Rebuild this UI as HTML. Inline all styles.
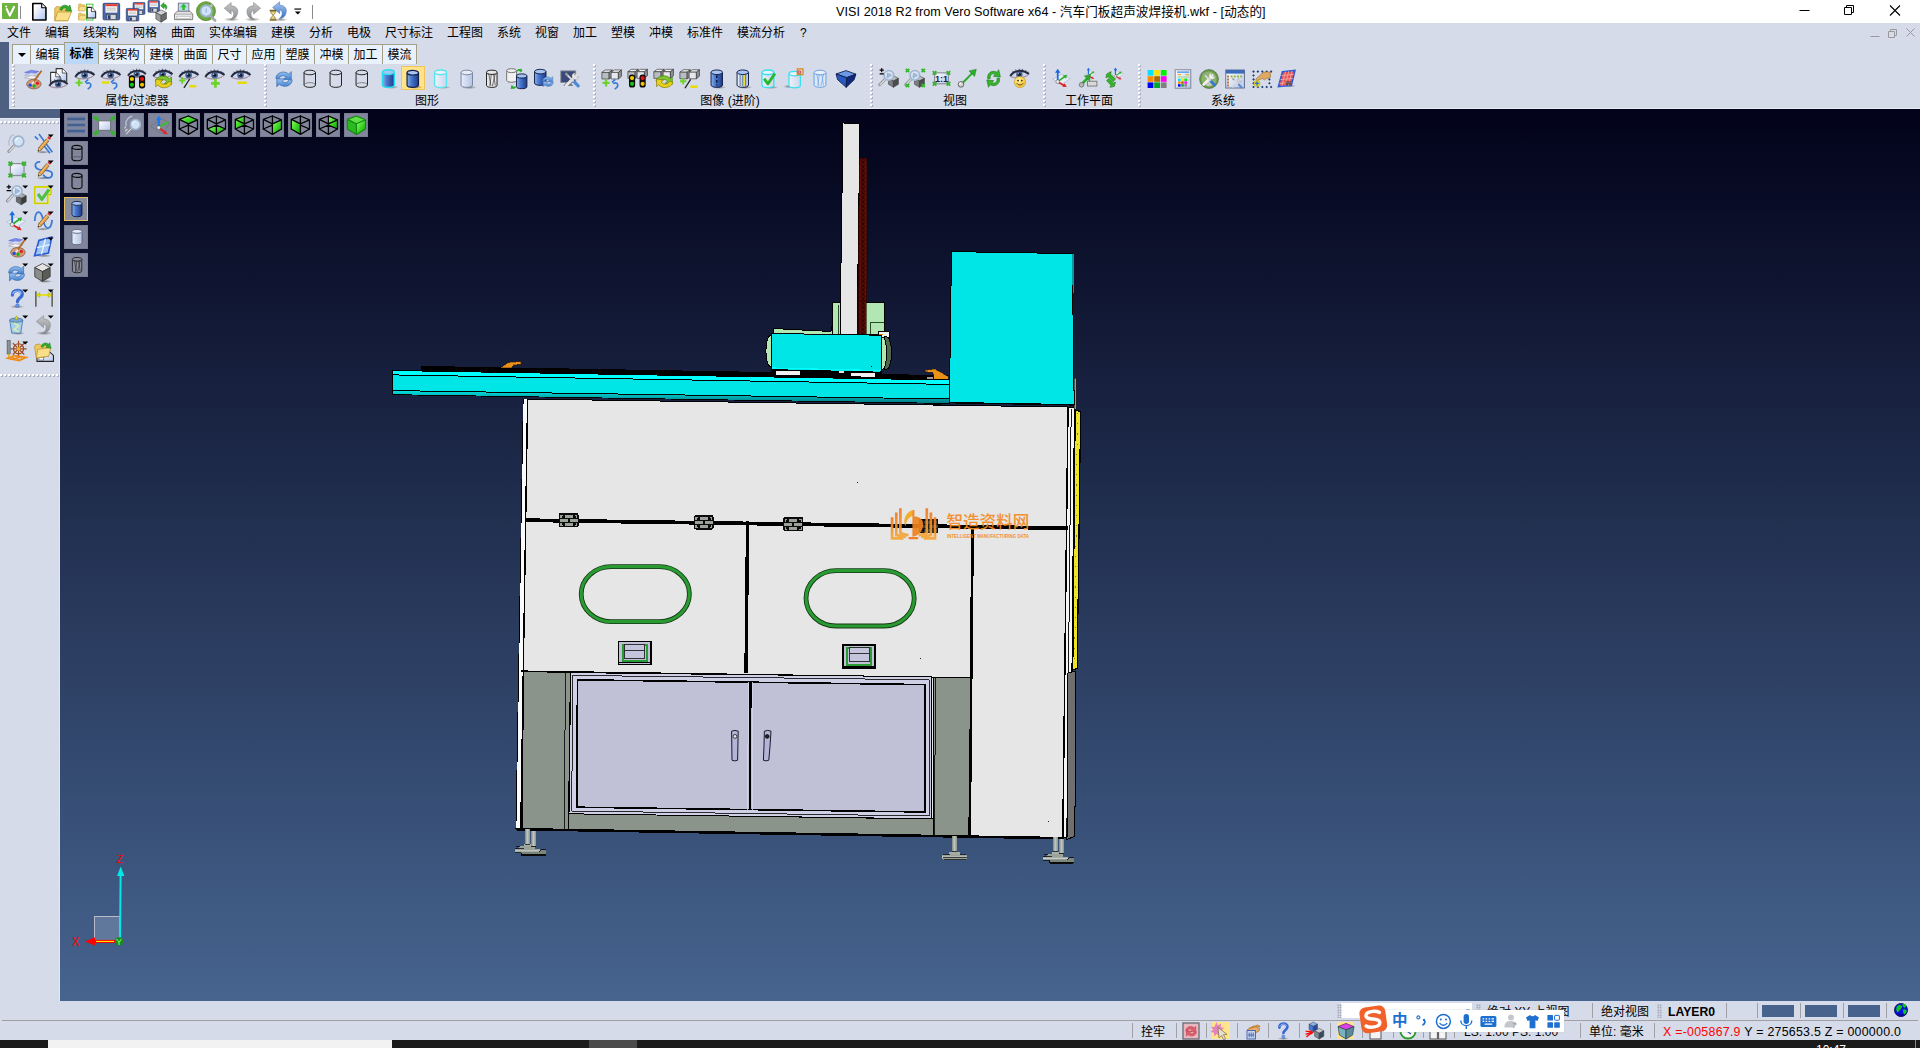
<!DOCTYPE html>
<html lang="zh-CN"><head><meta charset="utf-8"><title>VISI 2018 R2</title>
<style>
*{box-sizing:border-box;margin:0;padding:0}
html,body{width:1920px;height:1048px;overflow:hidden;background:#d6dbe9}
body{position:relative;font-family:"Liberation Sans","Noto Sans CJK SC",sans-serif;font-size:12px;color:#000;line-height:1}
.abs{position:absolute}
#title{position:absolute;left:0;top:0;width:1920px;height:23px;background:#fff}
#titletxt{position:absolute;left:836px;top:4px;width:436px;height:16px;font-size:12.6px;line-height:16px;white-space:nowrap;color:#000;letter-spacing:0.07px}
#menu{position:absolute;left:0;top:23px;width:1920px;height:20px;background:#d6dbe9}
#menu span{position:absolute;top:3px;font-size:12px;line-height:14px;white-space:nowrap}
#strip1{position:absolute;left:0;top:42px;width:9px;height:76px;background:#4d6082}
#strip2{position:absolute;left:0;top:108px;width:60px;height:10px;background:#4d6082}
.tab{position:absolute;top:44px;height:20px;background:#e9f1fc;border:1px solid #a39e86;border-bottom:none;font-size:12px;line-height:16px;text-align:center;white-space:nowrap;padding-top:2px}
.tab.sel{top:42px;height:22px;background:#bbd8f6;border-color:#a39e86;padding-top:3px;font-weight:bold;line-height:16px}
#ribbon{position:absolute;left:9px;top:64px;width:1911px;height:45px;background:#d6dbe9}
.glabel{position:absolute;top:94px;font-size:12px;line-height:14px;white-space:nowrap;transform:translateX(-50%)}
.grip{position:absolute;top:64px;width:2px;height:44px;background-image:repeating-linear-gradient(to bottom,#fff 0,#fff 2px,transparent 2px,transparent 4px);}
.gripb{position:absolute;top:65px;width:2px;height:43px;background-image:repeating-linear-gradient(to bottom,#a9aec0 0,#a9aec0 2px,transparent 2px,transparent 4px);}
.hgrip{position:absolute;left:0px;width:58px;height:2px;background-image:repeating-linear-gradient(to right,#fff 0,#fff 2px,transparent 2px,transparent 4px);}
.hgripb{position:absolute;left:1px;width:58px;height:2px;background-image:repeating-linear-gradient(to right,#a9aec0 0,#a9aec0 2px,transparent 2px,transparent 4px);}
#vp{position:absolute;left:60px;top:109px;width:1860px;height:892px;background:linear-gradient(to bottom,#02021a 0%,#46648f 100%);overflow:hidden}
#status{position:absolute;left:0;top:1001px;width:1920px;height:39px;background:#d6dbe9}
#task{position:absolute;left:0;top:1040px;width:1920px;height:8px;background:#1b1b1b}
.vsep{position:absolute;width:1px;background:#a0a0a4}
.st{position:absolute;font-size:12px;line-height:14px;white-space:nowrap}
.ic{position:absolute;overflow:visible}
.vbtn{position:absolute;width:24px;height:24px;background:#82869d;border:1px solid #787c93}
</style></head>
<body>
<div id="title"></div>
<div id="titletxt">VISI 2018 R2 from Vero Software x64 - 汽车门板超声波焊接机.wkf - [动态的]</div>
<svg class="abs" style="left:1790px;top:0" width="130" height="23" viewBox="0 0 130 23">
<path d="M9.5 10.5h10" stroke="#000" stroke-width="1" fill="none"/>
<path d="M54.5 7.5h7v7h-7z M56.5 7.5v-2h7v7h-2" stroke="#000" stroke-width="1" fill="none"/>
<path d="M100 5.5l10 10M110 5.5l-10 10" stroke="#000" stroke-width="1.1" fill="none"/>
</svg>
<div id="menu">
<span style="left:7px">文件</span>
<span style="left:45px">编辑</span>
<span style="left:83px">线架构</span>
<span style="left:133px">网格</span>
<span style="left:171px">曲面</span>
<span style="left:209px">实体编辑</span>
<span style="left:271px">建模</span>
<span style="left:309px">分析</span>
<span style="left:347px">电极</span>
<span style="left:385px">尺寸标注</span>
<span style="left:447px">工程图</span>
<span style="left:497px">系统</span>
<span style="left:535px">视窗</span>
<span style="left:573px">加工</span>
<span style="left:611px">塑模</span>
<span style="left:649px">冲模</span>
<span style="left:687px">标准件</span>
<span style="left:737px">模流分析</span>
<span style="left:800px">?</span>
</div>
<svg class="abs" style="left:1866px;top:26px" width="54" height="14" viewBox="0 0 54 14">
<path d="M4.5 10.5h9" stroke="#9a9a9a" stroke-width="1" fill="none"/>
<path d="M22.5 5.5h6v6h-6z M24.5 5.5v-2h6v6h-2" stroke="#9a9a9a" stroke-width="1" fill="none"/>
<path d="M40.5 2.5l8 8M48.5 2.5l-8 8" stroke="#9a9a9a" stroke-width="1" fill="none"/>
</svg>
<div id="strip1"></div><div id="strip2"></div>
<div id="ribbon"></div>
<div class="tab" style="left:12px;width:19px"><svg width="8" height="4" viewBox="0 0 8 4" style="position:absolute;left:5px;top:8px"><path d="M0 0h8l-4 4z" fill="#000"/></svg></div>
<div class="tab" style="left:30px;width:35px">编辑</div>
<div class="tab sel" style="left:64px;width:35px">标准</div>
<div class="tab" style="left:98px;width:47px">线架构</div>
<div class="tab" style="left:144px;width:35px">建模</div>
<div class="tab" style="left:178px;width:35px">曲面</div>
<div class="tab" style="left:212px;width:35px">尺寸</div>
<div class="tab" style="left:246px;width:35px">应用</div>
<div class="tab" style="left:280px;width:35px">塑膜</div>
<div class="tab" style="left:314px;width:35px">冲模</div>
<div class="tab" style="left:348px;width:35px">加工</div>
<div class="tab" style="left:382px;width:35px">模流</div>
<div class="gripb" style="left:13px"></div><div class="grip" style="left:12px"></div>
<div class="gripb" style="left:265px"></div><div class="grip" style="left:264px"></div>
<div class="gripb" style="left:594px"></div><div class="grip" style="left:593px"></div>
<div class="gripb" style="left:871px"></div><div class="grip" style="left:870px"></div>
<div class="gripb" style="left:1044px"></div><div class="grip" style="left:1043px"></div>
<div class="gripb" style="left:1139px"></div><div class="grip" style="left:1138px"></div>
<div class="glabel" style="left:137px">属性/过滤器</div>
<div class="glabel" style="left:427px">图形</div>
<div class="glabel" style="left:730px">图像 (进阶)</div>
<div class="glabel" style="left:955px">视图</div>
<div class="glabel" style="left:1089px">工作平面</div>
<div class="glabel" style="left:1223px">系统</div>
<div class="abs" style="left:9px;top:108px;width:1911px;height:1px;background:#e6eaf3"></div>
<div class="abs" style="left:0;top:118px;width:60px;height:1px;background:#e4e8f2"></div>
<div class="abs" style="left:59px;top:118px;width:1px;height:883px;background:#e4e8f2"></div>
<div class="hgripb" style="top:122px"></div><div class="hgrip" style="top:121px"></div>
<div class="hgripb" style="top:375px"></div><div class="hgrip" style="top:374px"></div>
<div id="vp">
<svg class="abs" style="left:0;top:0" width="1860" height="892" viewBox="60 109 1860 892" shape-rendering="crispEdges">
<defs><pattern id="chain" x="858.4" y="158" width="9" height="4.4" patternUnits="userSpaceOnUse"><rect width="9" height="4.4" fill="#6a1008"/><circle cx="4.5" cy="2.2" r="1.7" fill="none" stroke="#1c0200" stroke-width="1" shape-rendering="auto"/><path d="M0.5 0v4.4M8.5 0v4.4" stroke="#2a0400" stroke-width="1"/></pattern><linearGradient id="beamb" x1="0" y1="0" x2="0" y2="1"><stop offset="0" stop-color="#00e0e0"/><stop offset="1" stop-color="#007a84"/></linearGradient></defs>
<polygon points="843,123 860,123.5 857,336 840,336" fill="#e6e6e6" stroke="#000" stroke-width="1"/>
<polygon points="859.6,158 866.4,158 868,165 866.6,336 857.4,336" fill="url(#chain)" stroke="#2a0400" stroke-width="0.6"/>
<polygon points="832,302 884,303 884,335 832,334" fill="#b2e6b2" stroke="#000" stroke-width="1"/>
<polygon points="773.5,328.5 831,331.5 832,326 832,336 773.5,335" fill="#b2e6b2" stroke="#000" stroke-width="1"/>
<path d="M838.2 305v29M870.6 322.4v12M870.6 322.4h13.4" stroke="#1b3a1b" stroke-width="0.9" fill="none"/>
<polygon points="840.6,300 858,300 857,336 840,336" fill="#e6e6e6"/>
<path d="M840.6 300L840 336M858 300L857.4 336" stroke="#000" stroke-width="1"/>
<polygon points="858,300 866.2,300 866,336 857.6,336" fill="url(#chain)" stroke="#2a0400" stroke-width="0.6"/>
<polygon points="878,331.5 889,332 889,338 878,337" fill="#f2f2f2" stroke="#000" stroke-width="1"/>
<path d="M878.5 334.5h4" stroke="#e08000" stroke-width="1.5"/>
<ellipse cx="770.5" cy="351" rx="4.6" ry="15.5" fill="#b2e6b2" stroke="#000" stroke-width="1"/>
<ellipse cx="886" cy="353" rx="5.6" ry="16.5" fill="#4f6650" stroke="#000" stroke-width="1"/>
<ellipse cx="882.5" cy="353" rx="4.2" ry="16" fill="#b2e6b2" stroke="#000" stroke-width="1"/>
<polygon points="421,365.9 948,375.2 948,381 392,371.4 392,370.4 421,370.6" fill="#000"/>
<polygon points="771,368 881.5,370 881.5,379.6 771,377.6" fill="#000"/>
<polygon points="501,367.6 508.6,362.6 520.6,361.6 520.8,364.2 513.4,364.8 511.8,367.8" fill="#e8921a" stroke="#5a3000" stroke-width="0.4"/>
<polygon points="925,370.3 935,369.2 948.4,376.8 948.4,379.4 934,379.4 933.4,372.5 925.8,371.8" fill="#e8921a" stroke="#5a3000" stroke-width="0.4"/>
<rect x="927" y="376.6" width="6" height="2.3" fill="#9a9a9a"/>
<polygon points="771,333.5 881.5,335.2 881,372.2 771,369.6" fill="#00e5e5" stroke="#000" stroke-width="1"/>
<path d="M771.6 368L880.6 370.6" stroke="#00ffff" stroke-width="1.2"/>
<rect x="871" y="366" width="1" height="1" fill="#003"/>
<polygon points="776,370.9 800,371.4 800,375.2 776,374.7" fill="#f0f0f0"/>
<polygon points="851,372.5 875,373 875,376.8 851,376.3" fill="#f0f0f0"/>
<rect x="839" y="371.4" width="5" height="1.6" fill="#e0e0e0"/>
<polygon points="392.2,370.5 949,380 949,403.4 392.2,394.6" fill="#00e5e5" stroke="#000" stroke-width="1"/>
<polygon points="392.8,371 949,380.5 949,384.2 392.8,374.6" fill="#00ffff"/>
<path d="M392.8 374.9L949 384.4" stroke="#000" stroke-width="1"/>
<polygon points="392.8,390.8 949,399.2 949,403 392.8,394.2" fill="url(#beamb)"/>
<path d="M392.8 390.6L949 399" stroke="#000" stroke-width="1"/>
<path d="M560 399.8L760 403M820 403.6L949 405.2" stroke="#000" stroke-width="1.2"/>
<polygon points="523.4,399 1068,407 1063.6,837.4 516,828.4" fill="#e6e6e6" stroke="#000" stroke-width="1"/>
<polygon points="523.6,399.4 527.4,399.5 520.4,828 516.4,828" fill="#fbfbfb"/>
<path d="M527.6 399.5L520.8 828.6" stroke="#000" stroke-width="1.4"/>
<polygon points="1068,407 1074.4,407.2 1070.4,838.6 1062.8,837.6" fill="#f6f6f6" stroke="#000" stroke-width="1"/>
<path d="M1071.2 409L1066.8 838" stroke="#000" stroke-width="0.9"/>
<path d="M1068 407L1062.8 837.6" stroke="#000" stroke-width="1.5"/>
<polygon points="1075.2,410 1080.6,411.6 1077.2,668.6 1072.8,670" fill="#ece424" stroke="#000" stroke-width="1.2"/>
<path d="M1077.4 413L1074.6 668" stroke="#6a6400" stroke-width="0.8" stroke-dasharray="1.2 9"/>
<polygon points="1067.8,673 1076,671 1074.8,836.4 1067,839.4" fill="#6f6f6f" stroke="#000" stroke-width="1"/>
<polygon points="1074,378 1076.4,378 1076.4,409.6 1074,408.6" fill="#9a9c9a" stroke="#222" stroke-width="0.6"/>
<polygon points="951.5,251.6 1072.2,253.6 1074.2,404.6 949.4,402.4" fill="#00e5e5" stroke="#000" stroke-width="1"/>
<polygon points="1072.2,253.6 1074,254 1074.2,293 1072.6,293" fill="#009aa0"/>
<path d="M950 402.8L1074 405" stroke="#000" stroke-width="1.2"/>
<path d="M526 520.2L1068 528.2" stroke="#000" stroke-width="3.8" stroke-linecap="butt"/>
<path d="M747.6 521L746 673" stroke="#000" stroke-width="3.4"/>
<path d="M972.6 527L969.6 836" stroke="#000" stroke-width="2.8"/>
<path d="M521 671.2L972 678" stroke="#000" stroke-width="1.6"/>
<g transform="translate(559,513)"><rect x="0" y="0" width="19.6" height="14.4" rx="1.8" fill="#0c0c0c"/><rect x="5.6" y="1.8" width="8" height="2.8" fill="#9aa29a"/><rect x="1.4" y="1.6" width="2.6" height="1.2" fill="#9aa29a"/><rect x="15.8" y="1.6" width="2.6" height="1.2" fill="#9aa29a"/><rect x="1.4" y="1.6" width="1.2" height="3" fill="#9aa29a"/><rect x="17.2" y="1.6" width="1.2" height="3" fill="#9aa29a"/><rect x="0.8" y="5.9" width="8" height="2.9" fill="#9aa29a"/><rect x="10.8" y="5.9" width="8.2" height="2.9" fill="#9aa29a"/><rect x="5.6" y="10.2" width="8" height="2.8" fill="#9aa29a"/><rect x="1.4" y="11.8" width="2.6" height="1.2" fill="#9aa29a"/><rect x="15.8" y="11.8" width="2.6" height="1.2" fill="#9aa29a"/><rect x="1.4" y="10.2" width="1.2" height="2.8" fill="#9aa29a"/><rect x="17.2" y="10.2" width="1.2" height="2.8" fill="#9aa29a"/></g>
<g transform="translate(694,515.2)"><rect x="0" y="0" width="19.6" height="14.4" rx="1.8" fill="#0c0c0c"/><rect x="5.6" y="1.8" width="8" height="2.8" fill="#9aa29a"/><rect x="1.4" y="1.6" width="2.6" height="1.2" fill="#9aa29a"/><rect x="15.8" y="1.6" width="2.6" height="1.2" fill="#9aa29a"/><rect x="1.4" y="1.6" width="1.2" height="3" fill="#9aa29a"/><rect x="17.2" y="1.6" width="1.2" height="3" fill="#9aa29a"/><rect x="0.8" y="5.9" width="8" height="2.9" fill="#9aa29a"/><rect x="10.8" y="5.9" width="8.2" height="2.9" fill="#9aa29a"/><rect x="5.6" y="10.2" width="8" height="2.8" fill="#9aa29a"/><rect x="1.4" y="11.8" width="2.6" height="1.2" fill="#9aa29a"/><rect x="15.8" y="11.8" width="2.6" height="1.2" fill="#9aa29a"/><rect x="1.4" y="10.2" width="1.2" height="2.8" fill="#9aa29a"/><rect x="17.2" y="10.2" width="1.2" height="2.8" fill="#9aa29a"/></g>
<g transform="translate(783.4,517)"><rect x="0" y="0" width="19.6" height="14.4" rx="1.8" fill="#0c0c0c"/><rect x="5.6" y="1.8" width="8" height="2.8" fill="#9aa29a"/><rect x="1.4" y="1.6" width="2.6" height="1.2" fill="#9aa29a"/><rect x="15.8" y="1.6" width="2.6" height="1.2" fill="#9aa29a"/><rect x="1.4" y="1.6" width="1.2" height="3" fill="#9aa29a"/><rect x="17.2" y="1.6" width="1.2" height="3" fill="#9aa29a"/><rect x="0.8" y="5.9" width="8" height="2.9" fill="#9aa29a"/><rect x="10.8" y="5.9" width="8.2" height="2.9" fill="#9aa29a"/><rect x="5.6" y="10.2" width="8" height="2.8" fill="#9aa29a"/><rect x="1.4" y="11.8" width="2.6" height="1.2" fill="#9aa29a"/><rect x="15.8" y="11.8" width="2.6" height="1.2" fill="#9aa29a"/><rect x="1.4" y="10.2" width="1.2" height="2.8" fill="#9aa29a"/><rect x="17.2" y="10.2" width="1.2" height="2.8" fill="#9aa29a"/></g>
<g transform="translate(918.6,519)"><rect x="0" y="0" width="19.6" height="14.4" rx="1.8" fill="#0c0c0c"/><rect x="5.6" y="1.8" width="8" height="2.8" fill="#3a3c3a"/><rect x="1.4" y="1.6" width="2.6" height="1.2" fill="#3a3c3a"/><rect x="15.8" y="1.6" width="2.6" height="1.2" fill="#3a3c3a"/><rect x="1.4" y="1.6" width="1.2" height="3" fill="#3a3c3a"/><rect x="17.2" y="1.6" width="1.2" height="3" fill="#3a3c3a"/><rect x="0.8" y="5.9" width="8" height="2.9" fill="#3a3c3a"/><rect x="10.8" y="5.9" width="8.2" height="2.9" fill="#3a3c3a"/><rect x="5.6" y="10.2" width="8" height="2.8" fill="#3a3c3a"/><rect x="1.4" y="11.8" width="2.6" height="1.2" fill="#3a3c3a"/><rect x="15.8" y="11.8" width="2.6" height="1.2" fill="#3a3c3a"/><rect x="1.4" y="10.2" width="1.2" height="2.8" fill="#3a3c3a"/><rect x="17.2" y="10.2" width="1.2" height="2.8" fill="#3a3c3a"/></g>
<rect x="581.1999999999999" y="566.6" width="108.2" height="55.0" rx="29.9" ry="29.9" fill="none" stroke="#143814" stroke-width="4.8" shape-rendering="auto"/>
<rect x="581.1999999999999" y="566.6" width="108.2" height="55.0" rx="29.9" ry="29.9" fill="none" stroke="#2a9a32" stroke-width="3.1" shape-rendering="auto"/>
<rect x="806.0" y="570.6" width="108.2" height="55.400000000000006" rx="30.1" ry="30.1" fill="none" stroke="#143814" stroke-width="4.8" shape-rendering="auto"/>
<rect x="806.0" y="570.6" width="108.2" height="55.400000000000006" rx="30.1" ry="30.1" fill="none" stroke="#2a9a32" stroke-width="3.1" shape-rendering="auto"/>
<g transform="translate(618.4,641.4)"><rect x="0" y="0" width="32.4" height="23.2" fill="#c0c0d6" stroke="#000" stroke-width="1.6"/><rect x="4.4" y="3.4" width="24" height="16.4" fill="none" stroke="#2a9a32" stroke-width="2.2"/><rect x="6.4" y="3" width="20" height="13.6" fill="#c4c4dc" stroke="#222" stroke-width="0.9"/><path d="M6.4 8.6h20" stroke="#222" stroke-width="0.9"/><path d="M1 21.4h30.4" stroke="#000" stroke-width="1.2"/></g>
<g transform="translate(842.8,644.8)"><rect x="0" y="0" width="32.4" height="23.2" fill="#c0c0d6" stroke="#000" stroke-width="1.6"/><rect x="4.4" y="3.4" width="24" height="16.4" fill="none" stroke="#2a9a32" stroke-width="2.2"/><rect x="6.4" y="3" width="20" height="13.6" fill="#c4c4dc" stroke="#222" stroke-width="0.9"/><path d="M6.4 8.6h20" stroke="#222" stroke-width="0.9"/><path d="M1 21.4h30.4" stroke="#000" stroke-width="1.2"/></g>
<polygon points="523.6,671.6 570.4,672.4 568.4,829.4 522,828.6" fill="#8a948a" stroke="#000" stroke-width="1"/>
<polygon points="568.4,813.6 933,819 933,835.2 568.2,829.4" fill="#8a948a" stroke="#000" stroke-width="1"/>
<polygon points="933,677.4 970.6,678 968.8,835.6 933,835" fill="#8a948a" stroke="#000" stroke-width="1"/>
<path d="M565.6 672.4L564 829" stroke="#000" stroke-width="0.8"/>
<path d="M935.4 677.6L934.6 835" stroke="#000" stroke-width="0.8"/>
<polygon points="570.6,672.6 931.4,676.8 931.4,818.8 569,813.8" fill="#cfcfe6" stroke="#000" stroke-width="1"/>
<polygon points="573,675.4 929,679.8 929,816 571.6,811" fill="none" stroke="#000" stroke-width="0.8"/>
<polygon points="577.4,679.8 925,684.6 925,812 577,807.2" fill="#c0c0d6" stroke="#000" stroke-width="1.6"/>
<path d="M750.4 682L750 810" stroke="#000" stroke-width="2.4"/>
<path d="M748.2 682L747.8 810M752.8 682L752.4 810" stroke="#d6d6ea" stroke-width="0.8"/>
<path d="M731.6 731.2q3.4,-1.6 6.6,0l-0.6,29q-2.8,1.4 -5.6,0z" fill="#b4b4d8" stroke="#1a1a2a" stroke-width="1" shape-rendering="auto"/>
<circle cx="735" cy="736.4" r="1.9" fill="#e8e8f4" stroke="#111" stroke-width="0.8" shape-rendering="auto"/>
<path d="M764.4 731.2q3.4,-1.6 6.6,0l-1,15l-1.2,14q-2.6,1.4 -5.4,0l0.6,-14z" fill="#b4b4d8" stroke="#1a1a2a" stroke-width="1" shape-rendering="auto"/>
<circle cx="767.2" cy="736.4" r="1.9" fill="#22222e" stroke="#111" stroke-width="0.8" shape-rendering="auto"/>
<path d="M516 829.2L1064 838.2" stroke="#000" stroke-width="2.6"/>
<defs><linearGradient id="stem" x1="0" y1="0" x2="1" y2="0"><stop offset="0" stop-color="#7e867e"/><stop offset="0.45" stop-color="#c2c8c2"/><stop offset="1" stop-color="#8a928a"/></linearGradient><linearGradient id="disc" x1="0" y1="0" x2="0" y2="1"><stop offset="0" stop-color="#8a928a"/><stop offset="0.5" stop-color="#c6ccc6"/><stop offset="1" stop-color="#6a726a"/></linearGradient></defs>
<g transform="translate(525,829)"><rect x="0" y="0" width="5" height="15.6" fill="url(#stem)"/><rect x="6.2" y="2.4" width="4.8" height="15" fill="url(#stem)"/><rect x="-1.4" y="15.4" width="7.4" height="1.6" fill="#aab0aa"/><path d="M0 15.2h5" stroke="#111" stroke-width="0.8"/><rect x="-6.2" y="17" width="16.4" height="3" fill="#9aa29a"/><path d="M-9 17.6h4M6.4 17.4h4.4" stroke="#111" stroke-width="0.9"/><rect x="-10" y="20" width="25" height="3.8" rx="1.2" fill="url(#disc)"/><path d="M-10 19.9h9M-10 23.9h6" stroke="#111" stroke-width="0.8"/><rect x="-4" y="23.6" width="25" height="3.4" rx="1" fill="#0a0a0a"/><rect x="-3" y="23.8" width="24" height="1.5" fill="#7c847c"/><rect x="14.6" y="21" width="6.4" height="2.8" fill="#7c847c"/><path d="M14 22.8l2.6-2h4.4" stroke="#111" stroke-width="0.9" fill="none"/></g>
<g transform="translate(952,836)"><rect x="0" y="0" width="5" height="15.6" fill="url(#stem)"/><path d="M0 15.4h5" stroke="#111" stroke-width="0.8"/><rect x="-3" y="16.2" width="11.4" height="2.6" rx="1" fill="#a4aaa4"/><rect x="-10" y="18.8" width="25" height="5" rx="1.6" fill="url(#disc)"/><path d="M-9 18.8h7M8 18.8h6M-9.4 21.6h24M-8 23.9h22" stroke="#1a1c1a" stroke-width="0.8"/></g>
<g transform="translate(1053,836.6)"><rect x="0" y="0" width="5" height="15.6" fill="url(#stem)"/><rect x="6.2" y="2.4" width="4.8" height="15" fill="url(#stem)"/><rect x="-1.4" y="15.4" width="7.4" height="1.6" fill="#aab0aa"/><path d="M0 15.2h5" stroke="#111" stroke-width="0.8"/><rect x="-6.2" y="17" width="16.4" height="3" fill="#9aa29a"/><path d="M-9 17.6h4M6.4 17.4h4.4" stroke="#111" stroke-width="0.9"/><rect x="-10" y="20" width="25" height="3.8" rx="1.2" fill="url(#disc)"/><path d="M-10 19.9h9M-10 23.9h6" stroke="#111" stroke-width="0.8"/><rect x="-4" y="23.6" width="25" height="3.4" rx="1" fill="#0a0a0a"/><rect x="-3" y="23.8" width="24" height="1.5" fill="#7c847c"/><rect x="14.6" y="21" width="6.4" height="2.8" fill="#7c847c"/><path d="M14 22.8l2.6-2h4.4" stroke="#111" stroke-width="0.9" fill="none"/></g>
<rect x="857" y="482" width="1" height="1" fill="#222"/><rect x="920" y="658" width="1" height="1" fill="#222"/><rect x="1048" y="821" width="1" height="1" fill="#222"/>
<defs><linearGradient id="wmg" x1="0" y1="0" x2="0" y2="1"><stop offset="0" stop-color="#f07a22"/><stop offset="1" stop-color="#f6a637"/></linearGradient></defs>
<g shape-rendering="auto" opacity="0.92"><g fill="none" stroke="url(#wmg)" stroke-width="2.7" stroke-linejoin="miter"><path d="M892.1 517.2V538.3H903.5"/><path d="M896.3 512.4V535.2L906 537"/><path d="M900.4 508.2V533.2L908.4 535.4"/><path d="M935 517.2V538.3H923.5"/><path d="M930.9 512.4V535.2L921 537"/><path d="M926.8 508.2V533.2L918.6 535.4"/></g><path d="M913.6 510C905.6 511.4 902.6 520 905.4 526.6C906.2 520.4 908.8 516.6 913.6 515.4z" fill="#f6a81c"/><path d="M912.4 510.4L914.4 510V516.6C919.4 516 923.6 520 923.2 525C922.8 531.4 918.4 535.8 912.4 536.8z" fill="#f0821e"/><rect x="908.4" y="537" width="10" height="2.3" rx="1.1" fill="#f07818"/><text x="946.4" y="528.4" font-family="'Liberation Sans','Noto Sans CJK SC',sans-serif" font-size="16.6" font-weight="500" fill="#f58a22">智造资料网</text><text x="947" y="538" font-family="'Liberation Sans',sans-serif" font-size="4.7" font-weight="bold" fill="#f58a22" textLength="82" lengthAdjust="spacingAndGlyphs">INTELLIGENT MANUFACTURING DATA</text></g>
<g shape-rendering="auto"><rect x="94.5" y="916.5" width="25" height="24" fill="rgba(200,210,230,0.24)" stroke="#b8bcc8" stroke-width="1"/><path d="M120.6 875L120 941" stroke="#00e8e8" stroke-width="2"/><polygon points="120.7,866.6 124.4,876 117,876" fill="#00e8e8"/><path d="M94 941.4H118" stroke="#f00" stroke-width="3"/><path d="M96 941.4H114" stroke="#ff0" stroke-width="1"/><polygon points="85,941.4 95,937.2 95,945.6" fill="#f00"/><circle cx="119" cy="941.4" r="4.2" fill="#1a8a1a"/><text x="116" y="944.6" font-family="'Liberation Sans',sans-serif" font-size="9" fill="#7f7">Y</text><text x="116.6" y="863.4" font-family="'Liberation Sans',sans-serif" font-size="11" fill="#f00">Z</text><text x="72" y="946" font-family="'Liberation Sans',sans-serif" font-size="12" fill="#f00">X</text></g>
</svg>
</div>
<div id="status"></div>
<div class="abs" style="left:2px;top:1020px;width:1916px;height:1px;background:#a0a0a4"></div>
<div class="abs" style="left:1341px;top:1003px;width:131px;height:15px;background:#fff"></div>
<div class="st" style="left:1487px;top:1005px">绝对 XY 上视图</div>
<div class="st" style="left:1601px;top:1005px">绝对视图</div>
<div class="st" style="left:1668px;top:1005px;font-weight:bold;font-size:12.2px">LAYER0</div>
<div class="vsep" style="left:1592px;top:1003px;height:15px"></div>
<div class="vsep" style="left:1726px;top:1003px;height:15px"></div>
<div class="vsep" style="left:1757px;top:1003px;height:15px"></div>
<div class="vsep" style="left:1800px;top:1003px;height:15px"></div>
<div class="vsep" style="left:1843px;top:1003px;height:15px"></div>
<div class="vsep" style="left:1886px;top:1003px;height:15px"></div>
<div class="abs" style="left:1762px;top:1005px;width:32px;height:12px;background:#47638d"></div>
<div class="abs" style="left:1805px;top:1005px;width:32px;height:12px;background:#47638d"></div>
<div class="abs" style="left:1848px;top:1005px;width:32px;height:12px;background:#47638d"></div>
<div class="st" style="left:1141px;top:1025px">拴牢</div>
<div class="vsep" style="left:1132px;top:1023px;height:15px"></div>
<div class="vsep" style="left:1176px;top:1023px;height:15px"></div>
<div class="vsep" style="left:1206px;top:1023px;height:15px"></div>
<div class="vsep" style="left:1237px;top:1023px;height:15px"></div>
<div class="vsep" style="left:1268px;top:1023px;height:15px"></div>
<div class="vsep" style="left:1299px;top:1023px;height:15px"></div>
<div class="vsep" style="left:1330px;top:1023px;height:15px"></div>
<div class="vsep" style="left:1362px;top:1023px;height:15px"></div>
<div class="vsep" style="left:1393px;top:1023px;height:15px"></div>
<div class="vsep" style="left:1423px;top:1023px;height:15px"></div>
<div class="vsep" style="left:1454px;top:1023px;height:15px"></div>
<div class="vsep" style="left:1580px;top:1023px;height:15px"></div>
<div class="vsep" style="left:1654px;top:1023px;height:15px"></div>
<div class="st" style="left:1464px;top:1025px">LS: 1.00 PS: 1.00</div>
<div class="st" style="left:1589px;top:1025px">单位: 毫米</div>
<div class="st" style="left:1663px;top:1025px;font-size:12.4px;letter-spacing:0.25px"><span style="color:#f00">X =-005867.9</span> Y = 275653.5 Z = 000000.0</div>
<div id="task"></div>
<div class="abs" style="left:48px;top:1040px;width:344px;height:8px;background:#f2f2f2"></div>
<div class="abs" style="left:589px;top:1040px;width:48px;height:8px;background:#4b4b4b"></div>
<div class="abs" style="left:1915px;top:1040px;width:1px;height:8px;background:#8a8a8a"></div>
<div class="abs" style="left:1816px;top:1044px;font-size:12px;line-height:12px;color:#fff;height:4px;overflow:hidden">10:47</div><svg width="0" height="0" style="position:absolute"><defs>
<linearGradient id="gSq" x1="0" y1="0" x2="1" y2="1"><stop offset="0" stop-color="#ffffff"/><stop offset="1" stop-color="#b8c8ec"/></linearGradient>
<linearGradient id="gDoc" x1="0" y1="0" x2="1" y2="1"><stop offset="0.2" stop-color="#ffffff"/><stop offset="1" stop-color="#a8c0f0"/></linearGradient>
<linearGradient id="gRb" x1="0" y1="0" x2="0" y2="1"><stop offset="0" stop-color="#9cc4f0"/><stop offset="1" stop-color="#3f7fd0"/></linearGradient>
<linearGradient id="gGr" x1="0" y1="0" x2="0" y2="1"><stop offset="0" stop-color="#c4c6c8"/><stop offset="1" stop-color="#8e9092"/></linearGradient>
<linearGradient id="gBl" x1="0" y1="0" x2="0" y2="1"><stop offset="0" stop-color="#a8c8f0"/><stop offset="1" stop-color="#3a74c8"/></linearGradient>
<linearGradient id="gCylB" x1="0" y1="0" x2="1" y2="0"><stop offset="0" stop-color="#8fb4ea"/><stop offset="0.35" stop-color="#4a7ad0"/><stop offset="1" stop-color="#1c3a86"/></linearGradient>
<linearGradient id="gCylL" x1="0" y1="0" x2="1" y2="0"><stop offset="0" stop-color="#e8eefa"/><stop offset="1" stop-color="#b4c4e4"/></linearGradient>
<linearGradient id="gCylLC" x1="0" y1="0" x2="1" y2="0"><stop offset="0" stop-color="#eef2fa"/><stop offset="1" stop-color="#ccd6ec"/></linearGradient>
<radialGradient id="gSm" cx="0.4" cy="0.35" r="0.7"><stop offset="0" stop-color="#fff2a0"/><stop offset="1" stop-color="#f0b820"/></radialGradient>
<radialGradient id="gShadow" cx="0.5" cy="0.5" r="0.5"><stop offset="0" stop-color="#000" stop-opacity="0.45"/><stop offset="1" stop-color="#000" stop-opacity="0"/></radialGradient>
<linearGradient id="gGreenCube2" x1="0" y1="0" x2="1" y2="1"><stop offset="0" stop-color="#9cff70"/><stop offset="0.5" stop-color="#3ed828"/><stop offset="1" stop-color="#0f9a0a"/></linearGradient>
<linearGradient id="gGreenCube" x1="0" y1="0" x2="1" y2="1"><stop offset="0" stop-color="#7cf060"/><stop offset="1" stop-color="#1a9a10"/></linearGradient>
</defs></svg>
<div class="abs" style="left:2px;top:3px;width:16px;height:16px;background:#6db33f"></div>
<svg class="ic" style="left:2px;top:3px" width="16" height="16" viewBox="0 0 16 16"><path d="M4.4 5.4L7.8 12.6L12.4 3.2" stroke="#fff" stroke-width="2.1" fill="none" stroke-linejoin="round"/><circle cx="4.2" cy="3.4" r="1" fill="#fff"/></svg>
<div class="vsep" style="left:20px;top:6px;height:13px;background:#8a8a8a"></div>
<div class="vsep" style="left:312px;top:5px;height:14px;background:#8a8a8a"></div>
<svg class="ic" style="left:29.4px;top:1.4px" width="21.2" height="21.2" viewBox="0 0 20 20"><path d="M3.6 2.4h8.4l4 4v11.6h-12.4z" fill="url(#gDoc)" stroke="#000" stroke-width="1.5" stroke-linejoin="round"/><path d="M12.0 2.4v4h4" fill="#fff" stroke="#000" stroke-width="1.0499999999999998"/></svg>
<svg class="ic" style="left:53.4px;top:1.4px" width="21.2" height="21.2" viewBox="0 0 20 20"><g transform="translate(1,4) scale(1.0)"><path d="M0.6 3.2L2 1.4H6L7.2 3.2H13V14.6H0.6z" fill="#f0c860" stroke="#b08a28" stroke-width="0.6"/><path d="M0.6 14.6L3.4 6.4H16.4L13 14.6z" fill="#fadf8a" stroke="#b08a28" stroke-width="0.6"/></g><path d="M6.4 8.4C7 4 12 2.6 14.6 5.4L16 3.8L17.6 10L11.6 9L13 7.4C11.4 5.6 9 6.4 8.6 8.8z" fill="#2cae2c" stroke="#167016" stroke-width="0.5"/></svg>
<svg class="ic" style="left:77.4px;top:1.4px" width="21.2" height="21.2" viewBox="0 0 20 20"><rect x="9" y="3" width="6" height="15" fill="none" stroke="#4cc84c" stroke-width="1"/><g transform="translate(1,2) scale(0.5)"><path d="M0.6 3.2L2 1.4H6L7.2 3.2H13V14.6H0.6z" fill="#f0c860" stroke="#b08a28" stroke-width="0.6"/><path d="M0.6 14.6L3.4 6.4H16.4L13 14.6z" fill="#fadf8a" stroke="#b08a28" stroke-width="0.6"/></g><g transform="translate(1,10.6) scale(0.5)"><path d="M0.6 3.2L2 1.4H6L7.2 3.2H13V14.6H0.6z" fill="#f0c860" stroke="#b08a28" stroke-width="0.6"/><path d="M0.6 14.6L3.4 6.4H16.4L13 14.6z" fill="#fadf8a" stroke="#b08a28" stroke-width="0.6"/></g><path d="M9.6 6h4l4 4v6h-8z" fill="url(#gDoc)" stroke="#222" stroke-width="1.0" stroke-linejoin="round"/><path d="M13.600000000000001 6v4h4" fill="#fff" stroke="#222" stroke-width="0.7"/></svg>
<svg class="ic" style="left:100.9px;top:1.4px" width="21.2" height="21.2" viewBox="0 0 20 20"><g transform="translate(2,2.2) scale(1.0)"><rect x="0" y="0" width="15.6" height="15.6" rx="1" fill="#4a68a8" stroke="#2a3c70" stroke-width="0.8"/><rect x="2.2" y="0.8" width="11.2" height="8" fill="#f2f2f2"/><rect x="2.2" y="0.8" width="11.2" height="1.9" fill="#e43a2a"/><path d="M3.4 4.6h8.8M3.4 6.4h8.8" stroke="#b8b8b8" stroke-width="0.8"/><rect x="3.6" y="10.4" width="8.6" height="5" fill="#d8d8d8" stroke="#222" stroke-width="0.5"/><rect x="4.6" y="11.2" width="2.4" height="3.6" fill="#2a3c70"/></g></svg>
<svg class="ic" style="left:125.4px;top:1.4px" width="21.2" height="21.2" viewBox="0 0 20 20"><g transform="translate(7.6,1.4) scale(0.72)"><rect x="0" y="0" width="15.6" height="15.6" rx="1" fill="#4a68a8" stroke="#2a3c70" stroke-width="0.8"/><rect x="2.2" y="0.8" width="11.2" height="8" fill="#f2f2f2"/><rect x="2.2" y="0.8" width="11.2" height="1.9" fill="#e43a2a"/><path d="M3.4 4.6h8.8M3.4 6.4h8.8" stroke="#b8b8b8" stroke-width="0.8"/><rect x="3.6" y="10.4" width="8.6" height="5" fill="#d8d8d8" stroke="#222" stroke-width="0.5"/><rect x="4.6" y="11.2" width="2.4" height="3.6" fill="#2a3c70"/></g><g transform="translate(1.2,7) scale(0.76)"><rect x="0" y="0" width="15.6" height="15.6" rx="1" fill="#4a68a8" stroke="#2a3c70" stroke-width="0.8"/><rect x="2.2" y="0.8" width="11.2" height="8" fill="#f2f2f2"/><rect x="2.2" y="0.8" width="11.2" height="1.9" fill="#e43a2a"/><path d="M3.4 4.6h8.8M3.4 6.4h8.8" stroke="#b8b8b8" stroke-width="0.8"/><rect x="3.6" y="10.4" width="8.6" height="5" fill="#d8d8d8" stroke="#222" stroke-width="0.5"/><rect x="4.6" y="11.2" width="2.4" height="3.6" fill="#2a3c70"/></g></svg>
<svg class="ic" style="left:148.4px;top:1.4px" width="21.2" height="21.2" viewBox="0 0 20 20"><g transform="translate(0,-0.4) scale(0.7)"><rect x="0" y="0" width="15.6" height="15.6" rx="1" fill="#4a68a8" stroke="#2a3c70" stroke-width="0.8"/><rect x="2.2" y="0.8" width="11.2" height="8" fill="#f2f2f2"/><rect x="2.2" y="0.8" width="11.2" height="1.9" fill="#e43a2a"/><path d="M3.4 4.6h8.8M3.4 6.4h8.8" stroke="#b8b8b8" stroke-width="0.8"/><rect x="3.6" y="10.4" width="8.6" height="5" fill="#d8d8d8" stroke="#222" stroke-width="0.5"/><rect x="4.6" y="11.2" width="2.4" height="3.6" fill="#2a3c70"/></g><path d="M12 4.4L15 1.4V3C18.4 3.4 18.6 7 16.6 8.4C17.2 6.6 16.4 5.6 15 5.6V7.4z" fill="#2cae2c" stroke="#167016" stroke-width="0.4"/><g transform="translate(7.4,8.4) scale(1.0)"><path d="M0 2.6L5 0L10 2.6L5 5.2z" fill="#d0d2d4" stroke="#333" stroke-width="0.5"/><path d="M0 2.6L5 5.2V11.6L0 8.6z" fill="#9a9c9e" stroke="#333" stroke-width="0.5"/><path d="M10 2.6L5 5.2V11.6L10 8.6z" fill="#6a6c6e" stroke="#333" stroke-width="0.5"/></g></svg>
<svg class="ic" style="left:173.4px;top:1.4px" width="21.2" height="21.2" viewBox="0 0 20 20"><rect x="5" y="2" width="10" height="8" fill="#c4d8f8" stroke="#6a6e7a" stroke-width="0.8"/><path d="M10 2.2L13 5.8H11.2V8.4H8.8V5.8H7z" fill="#2cc02c"/><path d="M1.4 12.4L4 9.6H16L18.6 12.4V17.6H1.4z" fill="#e4e4e6" stroke="#6a6a6e" stroke-width="0.8"/><path d="M1.4 12.4H18.6" stroke="#8a8a8e" stroke-width="0.6"/><rect x="3.6" y="14.4" width="12.8" height="2" fill="#fafafa" stroke="#9a9a9a" stroke-width="0.4"/></svg>
<svg class="ic" style="left:196.4px;top:1.4px" width="21.2" height="21.2" viewBox="0 0 20 20"><circle cx="9.4" cy="9.6" r="9" fill="#6aa83a" stroke="#4a7a2a" stroke-width="0.6"/><path d="M13 13.4l5 5" stroke="#a8aaae" stroke-width="2.6" stroke-linecap="round"/><circle cx="9.6" cy="9.4" r="5.4" fill="#cfe2f6" stroke="#9ab0cc" stroke-width="1.7"/><path d="M12.6 4.6L15.6 2.6V6z" fill="#c8c8c8"/><path d="M9.6 7v4" stroke="#8aa0c0" stroke-width="0.8"/></svg>
<svg class="ic" style="left:221.4px;top:1.4px" width="21.2" height="21.2" viewBox="0 0 20 20"><ellipse cx="10" cy="17.4" rx="7.6" ry="1.8" fill="url(#gShadow)"/><g transform="translate(3,1.4) scale(1.0,1.0)"><path d="M0 5.4L6.6 0V3.2C12.4 3.2 14.6 8 11.4 13.4C9.4 16 6.4 15.6 6.4 15.6C10 13.4 9.8 7.8 6.6 7.8V11z" fill="url(#gGr)" stroke="#808488" stroke-width="0.5"/></g></svg>
<svg class="ic" style="left:243.4px;top:1.4px" width="21.2" height="21.2" viewBox="0 0 20 20"><ellipse cx="9" cy="17.4" rx="7.6" ry="1.8" fill="url(#gShadow)"/><g transform="translate(16.6,1.4) scale(-1.0,1.0)"><path d="M0 5.4L6.6 0V3.2C12.4 3.2 14.6 8 11.4 13.4C9.4 16 6.4 15.6 6.4 15.6C10 13.4 9.8 7.8 6.6 7.8V11z" fill="url(#gGr)" stroke="#808488" stroke-width="0.5"/></g></svg>
<svg class="ic" style="left:268.4px;top:1.4px" width="21.2" height="21.2" viewBox="0 0 20 20"><ellipse cx="12" cy="17.6" rx="6.6" ry="1.6" fill="url(#gShadow)"/><g transform="translate(4.4,0.8) scale(1.0,1.0)"><path d="M0 5.4L6.6 0V3.2C12.4 3.2 14.6 8 11.4 13.4C9.4 16 6.4 15.6 6.4 15.6C10 13.4 9.8 7.8 6.6 7.8V11z" fill="url(#gBl)" stroke="#3a6ab0" stroke-width="0.5"/></g><path d="M1.6 9h6.4M1.6 18h6.4" stroke="#7a6420" stroke-width="1.5"/><path d="M2.4 9.8C2.4 13 7.2 14 7.2 17.2H2.4C2.4 14 7.2 13 7.2 9.8z" fill="#e6d48a" stroke="#7a6420" stroke-width="0.6"/></svg>
<svg class="ic" style="left:287.4px;top:1.4px" width="21.2" height="21.2" viewBox="0 0 20 20"><path d="M7 7.6h6.4" stroke="#000" stroke-width="1.1"/><path d="M7.4 10h5.6l-2.8 2.8z" fill="#000"/></svg>
<svg class="ic" style="left:22.0px;top:67.5px" width="22.0" height="22.0" viewBox="0 0 20 20"><g transform="translate(0.4,0.6)"><path d="M2 3.4l6 -2l7 1.2l-6 2.2z" fill="#7a8af0" stroke="#4858c8" stroke-width="0.4"/><path d="M2 5.8l6 -2l7 1.2l-6 2.2z" fill="#d8dcf8" stroke="#8890c0" stroke-width="0.4"/><path d="M2 8.2l6 -2l7 1.2l-6 2.2z" fill="#f2f2f2" stroke="#8a8a8a" stroke-width="0.4"/><ellipse cx="10.4" cy="14" rx="6.6" ry="4.4" fill="#d09a78" stroke="#7a4a30" stroke-width="0.6"/><circle cx="7" cy="15" r="1.5" fill="#1a4af0"/><circle cx="10.6" cy="15.8" r="1.5" fill="#1ab01a"/><circle cx="13.6" cy="13.2" r="1.5" fill="#e02020"/><path d="M9.6 12.6L17.4 2" stroke="#b06820" stroke-width="1.5"/><path d="M8.6 14L10.4 11.6" stroke="#e8e8e8" stroke-width="1.6"/></g></svg>
<svg class="ic" style="left:48.0px;top:67.5px" width="22.0" height="22.0" viewBox="0 0 20 20"><path d="M7.4 0.6h5.6l4 4v7.4h-9.6z" fill="url(#gDoc)" stroke="#333" stroke-width="1.0" stroke-linejoin="round"/><path d="M13.0 0.6v4h4" fill="#fff" stroke="#333" stroke-width="0.7"/><path d="M2.4 4h4.6l4 4v6h-8.6z" fill="url(#gDoc)" stroke="#333" stroke-width="1.0" stroke-linejoin="round"/><path d="M7.0 4v4h4" fill="#fff" stroke="#333" stroke-width="0.7"/><g transform="translate(1,9.6) scale(0.9)"><path d="M0.3 7.6C3.6 2.4 12 1.4 18.4 5.8C14 9.8 5 10 0.3 7.6z" fill="#cdd6ea" stroke="#39415a" stroke-width="0.4"/><circle cx="9.2" cy="5.7" r="3.2" fill="#4a6694"/><circle cx="9.2" cy="5.7" r="1.6" fill="#141a2c"/><circle cx="8.2" cy="4.8" r="0.7" fill="#dfe8f8" opacity="0.8"/><path d="M0.2 7.4C3.6 1.4 12.6 0.2 18.8 5.4" fill="none" stroke="#232a40" stroke-width="1.9"/><path d="M3.4 3.4l-0.8-1.2M6 2l-0.5-1.3M9 1.3l0-1.3M12 1.6l0.5-1.3M15 2.8l0.9-1.2M17.2 4.2l1-0.9" stroke="#232a40" stroke-width="0.7"/><path d="M0.5 7.8C5 10.4 13.4 10 18.2 6" fill="none" stroke="#b88a98" stroke-width="0.7"/></g></svg>
<svg class="ic" style="left:74.0px;top:67.5px" width="22.0" height="22.0" viewBox="0 0 20 20"><g transform="translate(1,1.2) scale(0.94)"><path d="M0.3 7.6C3.6 2.4 12 1.4 18.4 5.8C14 9.8 5 10 0.3 7.6z" fill="#cdd6ea" stroke="#39415a" stroke-width="0.4"/><circle cx="9.2" cy="5.7" r="3.2" fill="#4a6694"/><circle cx="9.2" cy="5.7" r="1.6" fill="#141a2c"/><circle cx="8.2" cy="4.8" r="0.7" fill="#dfe8f8" opacity="0.8"/><path d="M0.2 7.4C3.6 1.4 12.6 0.2 18.8 5.4" fill="none" stroke="#232a40" stroke-width="1.9"/><path d="M3.4 3.4l-0.8-1.2M6 2l-0.5-1.3M9 1.3l0-1.3M12 1.6l0.5-1.3M15 2.8l0.9-1.2M17.2 4.2l1-0.9" stroke="#232a40" stroke-width="0.7"/><path d="M0.5 7.8C5 10.4 13.4 10 18.2 6" fill="none" stroke="#b88a98" stroke-width="0.7"/></g><path d="M1.3999999999999995 13.4h6.4M4.6 10.2v6.4" stroke="#6fd22a" stroke-width="2.0" fill="none"/><path d="M10 13l3 -2.6M11 14.2c4.5,-2.5 6,2.5 1.4,5" stroke="#3a7ad6" stroke-width="1.5" fill="none"/></svg>
<svg class="ic" style="left:100.0px;top:67.5px" width="22.0" height="22.0" viewBox="0 0 20 20"><g transform="translate(1,1.2) scale(0.94)"><path d="M0.3 7.6C3.6 2.4 12 1.4 18.4 5.8C14 9.8 5 10 0.3 7.6z" fill="#cdd6ea" stroke="#39415a" stroke-width="0.4"/><circle cx="9.2" cy="5.7" r="3.2" fill="#4a6694"/><circle cx="9.2" cy="5.7" r="1.6" fill="#141a2c"/><circle cx="8.2" cy="4.8" r="0.7" fill="#dfe8f8" opacity="0.8"/><path d="M0.2 7.4C3.6 1.4 12.6 0.2 18.8 5.4" fill="none" stroke="#232a40" stroke-width="1.9"/><path d="M3.4 3.4l-0.8-1.2M6 2l-0.5-1.3M9 1.3l0-1.3M12 1.6l0.5-1.3M15 2.8l0.9-1.2M17.2 4.2l1-0.9" stroke="#232a40" stroke-width="0.7"/><path d="M0.5 7.8C5 10.4 13.4 10 18.2 6" fill="none" stroke="#b88a98" stroke-width="0.7"/></g><path d="M1.75 13.2h6.5" stroke="#e6dc00" stroke-width="2.2" fill="none"/><path d="M10 13l3 -2.6M11 14.2c4.5,-2.5 6,2.5 1.4,5" stroke="#3a7ad6" stroke-width="1.5" fill="none"/></svg>
<svg class="ic" style="left:126.0px;top:67.5px" width="22.0" height="22.0" viewBox="0 0 20 20"><g transform="translate(1.6,0.6) scale(0.88)"><path d="M0.3 7.6C3.6 2.4 12 1.4 18.4 5.8C14 9.8 5 10 0.3 7.6z" fill="#cdd6ea" stroke="#39415a" stroke-width="0.4"/><circle cx="9.2" cy="5.7" r="3.2" fill="#4a6694"/><circle cx="9.2" cy="5.7" r="1.6" fill="#141a2c"/><circle cx="8.2" cy="4.8" r="0.7" fill="#dfe8f8" opacity="0.8"/><path d="M0.2 7.4C3.6 1.4 12.6 0.2 18.8 5.4" fill="none" stroke="#232a40" stroke-width="1.9"/><path d="M3.4 3.4l-0.8-1.2M6 2l-0.5-1.3M9 1.3l0-1.3M12 1.6l0.5-1.3M15 2.8l0.9-1.2M17.2 4.2l1-0.9" stroke="#232a40" stroke-width="0.7"/><path d="M0.5 7.8C5 10.4 13.4 10 18.2 6" fill="none" stroke="#b88a98" stroke-width="0.7"/></g><rect x="2.6" y="6.6" width="5.6" height="12" rx="2.4" fill="#0c0c0c"/><circle cx="5.4" cy="10.0" r="1.9" fill="#f0d000"/><circle cx="5.4" cy="15.2" r="1.9" fill="#12c812"/><rect x="11.8" y="6.6" width="5.6" height="12" rx="2.4" fill="#0c0c0c"/><circle cx="14.600000000000001" cy="10.0" r="1.9" fill="#f01010"/><circle cx="14.600000000000001" cy="15.2" r="1.9" fill="#f0c000"/></svg>
<svg class="ic" style="left:152.0px;top:67.5px" width="22.0" height="22.0" viewBox="0 0 20 20"><g transform="translate(1,0.6) scale(0.94)"><path d="M0.3 7.6C3.6 2.4 12 1.4 18.4 5.8C14 9.8 5 10 0.3 7.6z" fill="#cdd6ea" stroke="#39415a" stroke-width="0.4"/><circle cx="9.2" cy="5.7" r="3.2" fill="#4a6694"/><circle cx="9.2" cy="5.7" r="1.6" fill="#141a2c"/><circle cx="8.2" cy="4.8" r="0.7" fill="#dfe8f8" opacity="0.8"/><path d="M0.2 7.4C3.6 1.4 12.6 0.2 18.8 5.4" fill="none" stroke="#232a40" stroke-width="1.9"/><path d="M3.4 3.4l-0.8-1.2M6 2l-0.5-1.3M9 1.3l0-1.3M12 1.6l0.5-1.3M15 2.8l0.9-1.2M17.2 4.2l1-0.9" stroke="#232a40" stroke-width="0.7"/><path d="M0.5 7.8C5 10.4 13.4 10 18.2 6" fill="none" stroke="#b88a98" stroke-width="0.7"/></g><g transform="translate(1.6,5.6) scale(1.28)"><path d="M1 5C2 1 9 0 11 3.4L12.6 2L12.6 7.4L7.6 6.6L9.2 5.2C7.4 3 4 3.6 3.4 6z" fill="#7cc82c" stroke="#4c7a12" stroke-width="0.5"/><path d="M13 6C12 10 5 11 3 7.6L1.4 9L1.4 3.6L6.4 4.4L4.8 5.8C6.6 8 10 7.4 10.6 5z" fill="#e6d21a" stroke="#8a7a08" stroke-width="0.5"/></g></svg>
<svg class="ic" style="left:178.0px;top:67.5px" width="22.0" height="22.0" viewBox="0 0 20 20"><g transform="translate(1,1.2) scale(0.94)"><path d="M0.3 7.6C3.6 2.4 12 1.4 18.4 5.8C14 9.8 5 10 0.3 7.6z" fill="#cdd6ea" stroke="#39415a" stroke-width="0.4"/><circle cx="9.2" cy="5.7" r="3.2" fill="#4a6694"/><circle cx="9.2" cy="5.7" r="1.6" fill="#141a2c"/><circle cx="8.2" cy="4.8" r="0.7" fill="#dfe8f8" opacity="0.8"/><path d="M0.2 7.4C3.6 1.4 12.6 0.2 18.8 5.4" fill="none" stroke="#232a40" stroke-width="1.9"/><path d="M3.4 3.4l-0.8-1.2M6 2l-0.5-1.3M9 1.3l0-1.3M12 1.6l0.5-1.3M15 2.8l0.9-1.2M17.2 4.2l1-0.9" stroke="#232a40" stroke-width="0.7"/><path d="M0.5 7.8C5 10.4 13.4 10 18.2 6" fill="none" stroke="#b88a98" stroke-width="0.7"/></g><path d="M0.9199999999999995 11.4h5.760000000000001M3.8 8.52v5.760000000000001" stroke="#6fd22a" stroke-width="1.8" fill="none"/><path d="M5.4 18L10.6 10" stroke="#222" stroke-width="1.2"/><path d="M10.15 16.6h6.5" stroke="#e6dc00" stroke-width="2.2" fill="none"/></svg>
<svg class="ic" style="left:204.0px;top:67.5px" width="22.0" height="22.0" viewBox="0 0 20 20"><g transform="translate(1,1.2) scale(0.94)"><path d="M0.3 7.6C3.6 2.4 12 1.4 18.4 5.8C14 9.8 5 10 0.3 7.6z" fill="#cdd6ea" stroke="#39415a" stroke-width="0.4"/><circle cx="9.2" cy="5.7" r="3.2" fill="#4a6694"/><circle cx="9.2" cy="5.7" r="1.6" fill="#141a2c"/><circle cx="8.2" cy="4.8" r="0.7" fill="#dfe8f8" opacity="0.8"/><path d="M0.2 7.4C3.6 1.4 12.6 0.2 18.8 5.4" fill="none" stroke="#232a40" stroke-width="1.9"/><path d="M3.4 3.4l-0.8-1.2M6 2l-0.5-1.3M9 1.3l0-1.3M12 1.6l0.5-1.3M15 2.8l0.9-1.2M17.2 4.2l1-0.9" stroke="#232a40" stroke-width="0.7"/><path d="M0.5 7.8C5 10.4 13.4 10 18.2 6" fill="none" stroke="#b88a98" stroke-width="0.7"/></g><path d="M6.4 14h8.0M10.4 10.0v8.0" stroke="#6fd22a" stroke-width="2.5" fill="none"/></svg>
<svg class="ic" style="left:230.0px;top:67.5px" width="22.0" height="22.0" viewBox="0 0 20 20"><g transform="translate(1,1.2) scale(0.94)"><path d="M0.3 7.6C3.6 2.4 12 1.4 18.4 5.8C14 9.8 5 10 0.3 7.6z" fill="#cdd6ea" stroke="#39415a" stroke-width="0.4"/><circle cx="9.2" cy="5.7" r="3.2" fill="#4a6694"/><circle cx="9.2" cy="5.7" r="1.6" fill="#141a2c"/><circle cx="8.2" cy="4.8" r="0.7" fill="#dfe8f8" opacity="0.8"/><path d="M0.2 7.4C3.6 1.4 12.6 0.2 18.8 5.4" fill="none" stroke="#232a40" stroke-width="1.9"/><path d="M3.4 3.4l-0.8-1.2M6 2l-0.5-1.3M9 1.3l0-1.3M12 1.6l0.5-1.3M15 2.8l0.9-1.2M17.2 4.2l1-0.9" stroke="#232a40" stroke-width="0.7"/><path d="M0.5 7.8C5 10.4 13.4 10 18.2 6" fill="none" stroke="#b88a98" stroke-width="0.7"/></g><path d="M6.8 13.4h8.4" stroke="#e6dc00" stroke-width="2.2" fill="none"/></svg>
<svg class="ic" style="left:273.0px;top:67.5px" width="22.0" height="22.0" viewBox="0 0 20 20"><g transform="translate(1.6,1.4) scale(1.03)"><path d="M1 8C1 2.4 8.4 0.4 12.4 4L14.6 1.8V8.8H7.6L9.8 6.6C7.6 4.6 4.6 5.4 4 8z" fill="url(#gRb)" stroke="#3a6ab0" stroke-width="0.6"/><path d="M15.4 9C15.4 14.6 8 16.6 4 13L1.8 15.2V8.2H8.8L6.6 10.4C8.8 12.4 11.8 11.6 12.4 9z" fill="url(#gRb)" stroke="#3a6ab0" stroke-width="0.6"/></g></svg>
<svg class="ic" style="left:299.0px;top:67.5px" width="22.0" height="22.0" viewBox="0 0 20 20"><path d="M4.6 4.08v11.44a5.2 2.08 0 0 0 10.4 0v-11.44" fill="none" stroke="#222" stroke-width="0.9"/><ellipse cx="9.8" cy="4.08" rx="5.2" ry="2.08" fill="none" stroke="#222" stroke-width="0.9"/><path d="M4.6 15.4a5.2 2.1 0 0 1 10.4 0" fill="none" stroke="#555" stroke-width="0.6"/></svg>
<svg class="ic" style="left:325.0px;top:67.5px" width="22.0" height="22.0" viewBox="0 0 20 20"><path d="M4.6 4.08v11.44a5.2 2.08 0 0 0 10.4 0v-11.44" fill="none" stroke="#222" stroke-width="0.9"/><ellipse cx="9.8" cy="4.08" rx="5.2" ry="2.08" fill="none" stroke="#222" stroke-width="0.9"/></svg>
<svg class="ic" style="left:351.0px;top:67.5px" width="22.0" height="22.0" viewBox="0 0 20 20"><path d="M4.6 4.08v11.44a5.2 2.08 0 0 0 10.4 0v-11.44" fill="none" stroke="#222" stroke-width="0.9"/><ellipse cx="9.8" cy="4.08" rx="5.2" ry="2.08" fill="none" stroke="#222" stroke-width="0.9"/><path d="M4.6 15.4a5.2 2.1 0 0 1 10.4 0" fill="none" stroke="#555" stroke-width="0.6"/></svg>
<svg class="ic" style="left:378.0px;top:67.5px" width="22.0" height="22.0" viewBox="0 0 20 20"><ellipse cx="12" cy="17.4" rx="7" ry="1.6" fill="url(#gShadow)"/><path d="M4 3.7600000000000002v11.68a5.4 2.16 0 0 0 10.8 0v-11.68" fill="url(#gCylB)" stroke="#22e0f0" stroke-width="1.3"/><ellipse cx="9.4" cy="3.7600000000000002" rx="5.4" ry="2.16" fill="#a8c4f0" stroke="#22e0f0" stroke-width="1.3"/></svg>
<div class="abs" style="left:401px;top:66px;width:24px;height:24px;background:#ffe48c;border:1px solid #f2c45a"></div>
<svg class="ic" style="left:402.0px;top:67.5px" width="22.0" height="22.0" viewBox="0 0 20 20"><ellipse cx="12" cy="17.4" rx="7" ry="1.6" fill="url(#gShadow)"/><path d="M4.6 4.28v11.24a5.2 2.08 0 0 0 10.4 0v-11.24" fill="url(#gCylB)" stroke="#14204a" stroke-width="1.1"/><ellipse cx="9.8" cy="4.28" rx="5.2" ry="2.08" fill="#a8c4f0" stroke="#14204a" stroke-width="1.1"/></svg>
<svg class="ic" style="left:430.0px;top:67.5px" width="22.0" height="22.0" viewBox="0 0 20 20"><ellipse cx="12" cy="17.6" rx="7" ry="1.4" fill="url(#gShadow)"/><path d="M4.2 3.96v11.68a5.4 2.16 0 0 0 10.8 0v-11.68" fill="url(#gCylLC)" stroke="#5ae6f0" stroke-width="1.2"/><ellipse cx="9.600000000000001" cy="3.96" rx="5.4" ry="2.16" fill="#eef2fa" stroke="#5ae6f0" stroke-width="1.2"/></svg>
<svg class="ic" style="left:456.0px;top:67.5px" width="22.0" height="22.0" viewBox="0 0 20 20"><ellipse cx="12" cy="17.6" rx="7" ry="1.6" fill="url(#gShadow)"/><path d="M4.6 4.08v11.44a5.2 2.08 0 0 0 10.4 0v-11.44" fill="url(#gCylL)" stroke="#7a86a0" stroke-width="0.9"/><ellipse cx="9.8" cy="4.08" rx="5.2" ry="2.08" fill="#e6ecf8" stroke="#7a86a0" stroke-width="0.9"/></svg>
<svg class="ic" style="left:481.0px;top:67.5px" width="22.0" height="22.0" viewBox="0 0 20 20"><path d="M5 3.92v11.76a4.8 1.92 0 0 0 9.6 0v-11.76" fill="#e8e8e8" stroke="#222" stroke-width="0.9"/><ellipse cx="9.8" cy="3.92" rx="4.8" ry="1.92" fill="#e8e8e8" stroke="#222" stroke-width="0.9"/><path d="M7 5l2 11M9.4 5.4l-1.4 11M11.4 5.4l1.6 10.6M13 5l-2.6 11.4" stroke="#333" stroke-width="0.6" fill="none"/></svg>
<svg class="ic" style="left:506.0px;top:67.5px" width="22.0" height="22.0" viewBox="0 0 20 20"><path d="M0.6 2.4v8.8a4.5 1.8 0 0 0 9 0v-8.8" fill="#f0f0f0" stroke="#666" stroke-width="0.8"/><ellipse cx="5.1" cy="2.4" rx="4.5" ry="1.8" fill="#f0f0f0" stroke="#666" stroke-width="0.8"/><path d="M9.6 7.28v9.64a4.7 1.8800000000000001 0 0 0 9.4 0v-9.64" fill="url(#gCylB)" stroke="#14204a" stroke-width="0.9"/><ellipse cx="14.3" cy="7.28" rx="4.7" ry="1.8800000000000001" fill="#a8c4f0" stroke="#14204a" stroke-width="0.9"/><path d="M10.4 1.2l4 -0.6l-0.6 3.6z" fill="#2cae2c"/><path d="M8.6 18.6l-4.4 0.4l1 -3.6z" fill="#2cae2c"/><path d="M10 2.6c2,-1 3.6,-0.6 4.6,0.4M4.6 17c2,1 3,0.8 4.4,0.2" stroke="#2cae2c" stroke-width="1.2" fill="none"/></svg>
<svg class="ic" style="left:533.0px;top:67.5px" width="22.0" height="22.0" viewBox="0 0 20 20"><path d="M1.4 3.2800000000000002v10.44a5.2 2.08 0 0 0 10.4 0v-10.44" fill="url(#gCylB)" stroke="#14204a" stroke-width="0.9"/><ellipse cx="6.6" cy="3.2800000000000002" rx="5.2" ry="2.08" fill="#a8c4f0" stroke="#14204a" stroke-width="0.9"/><g transform="translate(8,6.6) scale(0.68)"><path d="M1 8C1 2.4 8.4 0.4 12.4 4L14.6 1.8V8.8H7.6L9.8 6.6C7.6 4.6 4.6 5.4 4 8z" fill="url(#gRb)" stroke="#3a6ab0" stroke-width="0.6"/><path d="M15.4 9C15.4 14.6 8 16.6 4 13L1.8 15.2V8.2H8.8L6.6 10.4C8.8 12.4 11.8 11.6 12.4 9z" fill="url(#gRb)" stroke="#3a6ab0" stroke-width="0.6"/></g></svg>
<svg class="ic" style="left:559.0px;top:67.5px" width="22.0" height="22.0" viewBox="0 0 20 20"><rect x="1.6" y="2.6" width="13.6" height="10.6" fill="#3a4a78" stroke="#8a8e9a" stroke-width="0.8"/><path d="M6 13.4l-2 3h9l-2-3z" fill="#7a7e88"/><g transform="translate(4.4,2.6) scale(1.05)"><path d="M2 12.6L10.4 4.2" stroke="#e4e6e8" stroke-width="2.4" stroke-linecap="round"/><path d="M9.6 1.6a3 3 0 1 0 3.4 3.4l-2 0.4l-1.6-1.6z" fill="#e4e6e8" stroke="#888" stroke-width="0.3"/><path d="M2.4 3L10 10.6" stroke="#d8dadc" stroke-width="1.6"/><path d="M9.4 10l3 3" stroke="#4a8ad8" stroke-width="2.8" stroke-linecap="round"/><path d="M1.4 2l2 2" stroke="#9a9c9e" stroke-width="2"/></g></svg>
<svg class="ic" style="left:601.0px;top:67.5px" width="22.0" height="22.0" viewBox="0 0 20 20"><g transform="translate(0.8,1.4)"><path d="M0 2.6l3 -2.2h6.4l-2.8 2.2z" fill="#f2f3f5" stroke="#333" stroke-width="0.6"/><path d="M0 2.6h6.6v6h-6.6z" fill="#b9bcc0" stroke="#333" stroke-width="0.6"/><path d="M6.6 2.6l2.8 -2.2v5.8l-2.8 2.4z" fill="#8b8e94" stroke="#333" stroke-width="0.6"/><path d="M8.4 2.6l3 -2.2h6.4l-2.8 2.2z" fill="#f2f3f5" stroke="#333" stroke-width="0.6"/><path d="M8.4 2.6h6.6v6h-6.6z" fill="#e6e8ec" stroke="#333" stroke-width="0.6"/><path d="M15.0 2.6l2.8 -2.2v5.8l-2.8 2.4z" fill="#8b8e94" stroke="#333" stroke-width="0.6"/></g><path d="M1.3999999999999995 13.6h6.4M4.6 10.399999999999999v6.4" stroke="#6fd22a" stroke-width="2.0" fill="none"/><path d="M10 13l3 -2.6M11 14.2c4.5,-2.5 6,2.5 1.4,5" stroke="#3a7ad6" stroke-width="1.5" fill="none"/></svg>
<svg class="ic" style="left:627.0px;top:67.5px" width="22.0" height="22.0" viewBox="0 0 20 20"><g transform="translate(0.8,0.8)"><path d="M0 2.6l3 -2.2h6.4l-2.8 2.2z" fill="#f2f3f5" stroke="#333" stroke-width="0.6"/><path d="M0 2.6h6.6v6h-6.6z" fill="#b9bcc0" stroke="#333" stroke-width="0.6"/><path d="M6.6 2.6l2.8 -2.2v5.8l-2.8 2.4z" fill="#8b8e94" stroke="#333" stroke-width="0.6"/><path d="M8.4 2.6l3 -2.2h6.4l-2.8 2.2z" fill="#f2f3f5" stroke="#333" stroke-width="0.6"/><path d="M8.4 2.6h6.6v6h-6.6z" fill="#e6e8ec" stroke="#333" stroke-width="0.6"/><path d="M15.0 2.6l2.8 -2.2v5.8l-2.8 2.4z" fill="#8b8e94" stroke="#333" stroke-width="0.6"/></g><rect x="1.8" y="5.8" width="5.6" height="12" rx="2.4" fill="#0c0c0c"/><circle cx="4.6" cy="9.2" r="1.9" fill="#f0d000"/><circle cx="4.6" cy="14.399999999999999" r="1.9" fill="#12c812"/><rect x="11.4" y="5.8" width="5.6" height="12" rx="2.4" fill="#0c0c0c"/><circle cx="14.2" cy="9.2" r="1.9" fill="#f01010"/><circle cx="14.2" cy="14.399999999999999" r="1.9" fill="#f0c000"/></svg>
<svg class="ic" style="left:653.0px;top:67.5px" width="22.0" height="22.0" viewBox="0 0 20 20"><g transform="translate(0.8,0.8)"><path d="M0 2.6l3 -2.2h6.4l-2.8 2.2z" fill="#f2f3f5" stroke="#333" stroke-width="0.6"/><path d="M0 2.6h6.6v6h-6.6z" fill="#b9bcc0" stroke="#333" stroke-width="0.6"/><path d="M6.6 2.6l2.8 -2.2v5.8l-2.8 2.4z" fill="#8b8e94" stroke="#333" stroke-width="0.6"/><path d="M8.4 2.6l3 -2.2h6.4l-2.8 2.2z" fill="#f2f3f5" stroke="#333" stroke-width="0.6"/><path d="M8.4 2.6h6.6v6h-6.6z" fill="#e6e8ec" stroke="#333" stroke-width="0.6"/><path d="M15.0 2.6l2.8 -2.2v5.8l-2.8 2.4z" fill="#8b8e94" stroke="#333" stroke-width="0.6"/></g><g transform="translate(1.4,5.4) scale(1.28)"><path d="M1 5C2 1 9 0 11 3.4L12.6 2L12.6 7.4L7.6 6.6L9.2 5.2C7.4 3 4 3.6 3.4 6z" fill="#7cc82c" stroke="#4c7a12" stroke-width="0.5"/><path d="M13 6C12 10 5 11 3 7.6L1.4 9L1.4 3.6L6.4 4.4L4.8 5.8C6.6 8 10 7.4 10.6 5z" fill="#e6d21a" stroke="#8a7a08" stroke-width="0.5"/></g></svg>
<svg class="ic" style="left:679.0px;top:67.5px" width="22.0" height="22.0" viewBox="0 0 20 20"><g transform="translate(0.8,1.2)"><path d="M0 2.6l3 -2.2h6.4l-2.8 2.2z" fill="#f2f3f5" stroke="#333" stroke-width="0.6"/><path d="M0 2.6h6.6v6h-6.6z" fill="#b9bcc0" stroke="#333" stroke-width="0.6"/><path d="M6.6 2.6l2.8 -2.2v5.8l-2.8 2.4z" fill="#8b8e94" stroke="#333" stroke-width="0.6"/><path d="M8.4 2.6l3 -2.2h6.4l-2.8 2.2z" fill="#f2f3f5" stroke="#333" stroke-width="0.6"/><path d="M8.4 2.6h6.6v6h-6.6z" fill="#e6e8ec" stroke="#333" stroke-width="0.6"/><path d="M15.0 2.6l2.8 -2.2v5.8l-2.8 2.4z" fill="#8b8e94" stroke="#333" stroke-width="0.6"/></g><path d="M0.9199999999999995 12h5.760000000000001M3.8 9.12v5.760000000000001" stroke="#6fd22a" stroke-width="1.8" fill="none"/><path d="M5.4 18.4L10.6 10.4" stroke="#222" stroke-width="1.2"/><path d="M10.35 17h6.5" stroke="#e6dc00" stroke-width="2.2" fill="none"/></svg>
<svg class="ic" style="left:705.6px;top:67.5px" width="22.0" height="22.0" viewBox="0 0 20 20"><ellipse cx="12" cy="17.6" rx="6.6" ry="1.5" fill="url(#gShadow)"/><path d="M4.6 3.88v11.64a5.2 2.08 0 0 0 10.4 0v-11.64" fill="url(#gCylB)" stroke="#14204a" stroke-width="0.9"/><ellipse cx="9.8" cy="3.88" rx="5.2" ry="2.08" fill="#a8c4f0" stroke="#14204a" stroke-width="0.9"/><path d="M9.8 6.6v9.4" stroke="#0a1434" stroke-width="1.3" stroke-dasharray="2.6 1.6"/></svg>
<svg class="ic" style="left:731.6px;top:67.5px" width="22.0" height="22.0" viewBox="0 0 20 20"><ellipse cx="12" cy="17.6" rx="6.6" ry="1.5" fill="url(#gShadow)"/><path d="M4.6 3.88v11.64a5.2 2.08 0 0 0 10.4 0v-11.64" fill="url(#gCylL)" stroke="#14204a" stroke-width="0.9"/><ellipse cx="9.8" cy="3.88" rx="5.2" ry="2.08" fill="#a8c4f0" stroke="#14204a" stroke-width="0.9"/><path d="M8.6 6.4v10M11.2 6.4v10" stroke="#e8e040" stroke-width="1.4"/><path d="M7.4 6v10.4M9.8 6.4v10.4M12.4 6v10.4" stroke="#3a5aa8" stroke-width="0.7"/></svg>
<svg class="ic" style="left:758.0px;top:67.5px" width="22.0" height="22.0" viewBox="0 0 20 20"><ellipse cx="12" cy="17.6" rx="6.6" ry="1.5" fill="url(#gShadow)"/><path d="M3.6 3.96v11.68a5.4 2.16 0 0 0 10.8 0v-11.68" fill="url(#gCylLC)" stroke="#38e0f0" stroke-width="1.2"/><ellipse cx="9.0" cy="3.96" rx="5.4" ry="2.16" fill="#eef2fa" stroke="#38e0f0" stroke-width="1.2"/><path d="M5.6 9.6L9 14.4L15.4 5" stroke="#2cb82c" stroke-width="2.6" fill="none" stroke-linejoin="round"/></svg>
<svg class="ic" style="left:783.0px;top:67.5px" width="22.0" height="22.0" viewBox="0 0 20 20"><ellipse cx="6" cy="16.8" rx="6" ry="1.7" fill="url(#gShadow)"/><path d="M5.4 5.08v10.84a5.2 2.08 0 0 0 10.4 0v-10.84" fill="url(#gCylLC)" stroke="#38e0f0" stroke-width="1.1"/><ellipse cx="10.600000000000001" cy="5.08" rx="5.2" ry="2.08" fill="#eef2fa" stroke="#38e0f0" stroke-width="1.1"/><rect x="13" y="0.8" width="5.2" height="5.2" fill="none" stroke="#e08a1c" stroke-width="1.2"/><circle cx="15" cy="3.8" r="1.3" fill="none" stroke="#e03030" stroke-width="0.9"/></svg>
<svg class="ic" style="left:809.0px;top:67.5px" width="22.0" height="22.0" viewBox="0 0 20 20"><path d="M4.6 4.16v11.28a5.4 2.16 0 0 0 10.8 0v-11.28" fill="#dce8f8" stroke="#6aa0e0" stroke-width="0.9"/><ellipse cx="10.0" cy="4.16" rx="5.4" ry="2.16" fill="#e8f0fa" stroke="#6aa0e0" stroke-width="0.9"/><path d="M7 5l2 11M9.4 5.4l-1.4 11M11.6 5.4l1.6 10.6M13.4 5l-2.6 11.4" stroke="#6aa0e0" stroke-width="0.6" fill="none"/></svg>
<svg class="ic" style="left:835.0px;top:67.5px" width="22.0" height="22.0" viewBox="0 0 20 20"><path d="M1 5.4L10 2.4L19 5.6L10.6 8.8z" fill="#6a9ae8" stroke="#0c1c4a" stroke-width="0.8"/><path d="M1 5.4L10.6 8.8L10.2 17.6L2.4 10.6z" fill="#2a5ac0" stroke="#0c1c4a" stroke-width="0.8"/><path d="M19 5.6L10.6 8.8L10.2 17.6L17.4 10.6z" fill="#12287a" stroke="#0c1c4a" stroke-width="0.8"/></svg>
<svg class="ic" style="left:878.5px;top:68.0px" width="21.0" height="21.0" viewBox="0 0 20 20"><g transform="translate(9,7.4) scale(0.95)"><path d="M0 2.6L5 0L10 2.6L5 5.2z" fill="#b8babc" stroke="#333" stroke-width="0.5"/><path d="M0 2.6L5 5.2V11.6L0 8.6z" fill="#7a7c7e" stroke="#333" stroke-width="0.5"/><path d="M10 2.6L5 5.2V11.6L10 8.6z" fill="#4a4c4e" stroke="#333" stroke-width="0.5"/></g><path d="M6.180000000000001 10.219999999999999l-5.6 5.8" stroke="#8f9399" stroke-width="2.6" stroke-linecap="round"/><path d="M6.180000000000001 10.45l-5.2 5.4" stroke="#e6e8ea" stroke-width="1" stroke-linecap="round"/><circle cx="9.4" cy="7" r="4.6" fill="#cfe2f6" stroke="#9fb3cc" stroke-width="1.5"/><path d="M6.870000000000001 6.6a2.76 2.76 0 0 1 2.3 -2.53" fill="none" stroke="#fff" stroke-width="1" opacity="0.9"/><path d="M7.8 4.6v4.8l4 -2.4z" fill="#a8c0dc" stroke="#7a90b0" stroke-width="0.5"/><path d="M0.6 2h4M2.6 0v4M0.6 5.6h4" stroke="#000" stroke-width="1"/></svg>
<svg class="ic" style="left:904.5px;top:68.0px" width="21.0" height="21.0" viewBox="0 0 20 20"><g transform="translate(9,7.4) scale(0.95)"><path d="M0 2.6L5 0L10 2.6L5 5.2z" fill="#b8babc" stroke="#333" stroke-width="0.5"/><path d="M0 2.6L5 5.2V11.6L0 8.6z" fill="#7a7c7e" stroke="#333" stroke-width="0.5"/><path d="M10 2.6L5 5.2V11.6L10 8.6z" fill="#4a4c4e" stroke="#333" stroke-width="0.5"/></g><path d="M6.180000000000001 10.219999999999999l-5.6 5.8" stroke="#8f9399" stroke-width="2.6" stroke-linecap="round"/><path d="M6.180000000000001 10.45l-5.2 5.4" stroke="#e6e8ea" stroke-width="1" stroke-linecap="round"/><circle cx="9.4" cy="7" r="4.6" fill="#cfe2f6" stroke="#9fb3cc" stroke-width="1.5"/><path d="M6.870000000000001 6.6a2.76 2.76 0 0 1 2.3 -2.53" fill="none" stroke="#fff" stroke-width="1" opacity="0.9"/><path d="M7.8 4.6v4.8l4 -2.4z" fill="#a8c0dc" stroke="#7a90b0" stroke-width="0.5"/><path d="M0.7999999999999998 0.7999999999999998l3.2 3.2M4.0 0.7999999999999998l-3.2 3.2" stroke="#35b52a" stroke-width="1.6"/><path d="M15.799999999999999 0.7999999999999998l3.2 3.2M19.0 0.7999999999999998l-3.2 3.2" stroke="#35b52a" stroke-width="1.6"/><path d="M0.7999999999999998 15.000000000000002l3.2 3.2M4.0 15.000000000000002l-3.2 3.2" stroke="#35b52a" stroke-width="1.6"/><path d="M15.799999999999999 15.000000000000002l3.2 3.2M19.0 15.000000000000002l-3.2 3.2" stroke="#35b52a" stroke-width="1.6"/></svg>
<svg class="ic" style="left:930.5px;top:68.0px" width="21.0" height="21.0" viewBox="0 0 20 20"><rect x="3.4" y="4.6" width="13.2" height="10.4" fill="url(#gSq)" stroke="#8a8e96" stroke-width="1.1"/><path d="M1.7 2.8999999999999995l3.4 3.4M5.1 2.8999999999999995l-3.4 3.4" stroke="#35b52a" stroke-width="1.7"/><path d="M14.899999999999999 2.8999999999999995l3.4 3.4M18.299999999999997 2.8999999999999995l-3.4 3.4" stroke="#35b52a" stroke-width="1.7"/><path d="M1.7 13.3l3.4 3.4M5.1 13.3l-3.4 3.4" stroke="#35b52a" stroke-width="1.7"/><path d="M14.899999999999999 13.3l3.4 3.4M18.299999999999997 13.3l-3.4 3.4" stroke="#35b52a" stroke-width="1.7"/><text x="10" y="13.4" font-family="'Liberation Sans',sans-serif" font-size="8.6" font-weight="bold" text-anchor="middle" fill="#1a1a4a">1:1</text></svg>
<svg class="ic" style="left:957.0px;top:68.0px" width="21.0" height="21.0" viewBox="0 0 20 20"><path d="M4.6 15L15 4.4" stroke="#2cae2c" stroke-width="2"/><path d="M18.4 1.2L16.8 8L11.4 2.8z" fill="#2cae2c" stroke="#167016" stroke-width="0.4"/><circle cx="3.8" cy="15.6" r="2.7" fill="#d0d0d0" stroke="#444" stroke-width="0.7"/><circle cx="3" cy="14.8" r="0.9" fill="#fff"/></svg>
<svg class="ic" style="left:982.5px;top:68.0px" width="21.0" height="21.0" viewBox="0 0 20 20"><g transform="translate(1.6,1)"><path d="M3 9.6C1.6 4 7 0.4 11.6 3L13.4 0.6L15 7.6L8.4 7L10 5C7.4 3.6 4.6 5.8 5.4 9z" fill="#35b52a" stroke="#167016" stroke-width="0.5"/><path d="M14 8.4C15.4 14 10 17.6 5.4 15L3.6 17.4L2 10.4L8.6 11L7 13C9.6 14.4 12.4 12.2 11.6 9z" fill="#35b52a" stroke="#167016" stroke-width="0.5"/></g></svg>
<svg class="ic" style="left:1008.5px;top:68.0px" width="21.0" height="21.0" viewBox="0 0 20 20"><g transform="translate(1,0.6) scale(0.96)"><path d="M0.3 7.6C3.6 2.4 12 1.4 18.4 5.8C14 9.8 5 10 0.3 7.6z" fill="#cdd6ea" stroke="#39415a" stroke-width="0.4"/><circle cx="9.2" cy="5.7" r="3.2" fill="#4a6694"/><circle cx="9.2" cy="5.7" r="1.6" fill="#141a2c"/><circle cx="8.2" cy="4.8" r="0.7" fill="#dfe8f8" opacity="0.8"/><path d="M0.2 7.4C3.6 1.4 12.6 0.2 18.8 5.4" fill="none" stroke="#232a40" stroke-width="1.9"/><path d="M3.4 3.4l-0.8-1.2M6 2l-0.5-1.3M9 1.3l0-1.3M12 1.6l0.5-1.3M15 2.8l0.9-1.2M17.2 4.2l1-0.9" stroke="#232a40" stroke-width="0.7"/><path d="M0.5 7.8C5 10.4 13.4 10 18.2 6" fill="none" stroke="#b88a98" stroke-width="0.7"/></g><circle cx="10.4" cy="13.4" r="5.4" fill="url(#gSm)" stroke="#c89a20" stroke-width="0.5"/><circle cx="8.6" cy="12" r="0.8" fill="#3a2a00"/><circle cx="12.2" cy="12" r="0.8" fill="#3a2a00"/><path d="M7.4 14.6c1.6,2 4.4,2 6,0" stroke="#3a2a00" stroke-width="0.8" fill="none"/></svg>
<svg class="ic" style="left:1051.0px;top:68.0px" width="21.0" height="21.0" viewBox="0 0 20 20"><g transform="translate(1.4,0.6) scale(1.0)"><path d="M0 10L8.5 5.4L17 9.4L9 15z" fill="#e4ecf8" stroke="#aab4c8" stroke-width="0.6"/><path d="M5 12.4V3" stroke="#1a6ae0" stroke-width="1.7"/><path d="M5 0.2L7.6 4H2.4z" fill="#1a6ae0"/><path d="M5 12.4L11.6 7.6" stroke="#2cae2c" stroke-width="1.7"/><path d="M14 5.8L12.9 9.6L9.8 6.6z" fill="#2cae2c"/><path d="M5 12.4L11 16" stroke="#e02020" stroke-width="1.7"/><path d="M13.6 17.6L9.4 17.2L11.6 14z" fill="#e02020"/><circle cx="5" cy="12.4" r="1.8" fill="#e8e8e8" stroke="#555" stroke-width="0.5"/></g></svg>
<svg class="ic" style="left:1077.5px;top:68.0px" width="21.0" height="21.0" viewBox="0 0 20 20"><g transform="translate(6.8,-0.4) scale(0.62)"><path d="M0 10L8.5 5.4L17 9.4L9 15z" fill="#e4ecf8" stroke="#aab4c8" stroke-width="0.6"/><path d="M5 12.4V3" stroke="#1a6ae0" stroke-width="1.7"/><path d="M5 0.2L7.6 4H2.4z" fill="#1a6ae0"/><path d="M5 12.4L11.6 7.6" stroke="#2cae2c" stroke-width="1.7"/><path d="M14 5.8L12.9 9.6L9.8 6.6z" fill="#2cae2c"/><path d="M5 12.4L11 16" stroke="#e02020" stroke-width="1.7"/><path d="M13.6 17.6L9.4 17.2L11.6 14z" fill="#e02020"/><circle cx="5" cy="12.4" r="1.8" fill="#e8e8e8" stroke="#555" stroke-width="0.5"/></g><rect x="9" y="12.6" width="9" height="4.6" fill="#d8d8d8" stroke="#7a7a7a" stroke-width="0.9"/><path d="M3.4 15.4L9.4 9.4" stroke="#2cae2c" stroke-width="2.6"/><path d="M12 6.4L11 12.4L6 7.6z" fill="#2cae2c" stroke="#167016" stroke-width="0.4"/><circle cx="3.4" cy="16" r="2.2" fill="#b8b8b8" stroke="#555" stroke-width="0.6"/></svg>
<svg class="ic" style="left:1104.0px;top:68.0px" width="21.0" height="21.0" viewBox="0 0 20 20"><g transform="translate(7.6,-0.6) scale(0.66)"><path d="M0 10L8.5 5.4L17 9.4L9 15z" fill="#e4ecf8" stroke="#aab4c8" stroke-width="0.6"/><path d="M5 12.4V3" stroke="#1a6ae0" stroke-width="1.7"/><path d="M5 0.2L7.6 4H2.4z" fill="#1a6ae0"/><path d="M5 12.4L11.6 7.6" stroke="#2cae2c" stroke-width="1.7"/><path d="M14 5.8L12.9 9.6L9.8 6.6z" fill="#2cae2c"/><path d="M5 12.4L11 16" stroke="#e02020" stroke-width="1.7"/><path d="M13.6 17.6L9.4 17.2L11.6 14z" fill="#e02020"/><circle cx="5" cy="12.4" r="1.8" fill="#e8e8e8" stroke="#555" stroke-width="0.5"/></g><path d="M2.6 5.6L6.8 3.4L6.4 6L11 10.6L8.6 13L4 8.4L1.8 9.4z" fill="#35b52a" stroke="#167016" stroke-width="0.5"/><path d="M9.8 17.6L5.6 18.4L6.6 16.4L2.4 12L4.6 10L9 14.4L11 13.4z" fill="#35b52a" stroke="#167016" stroke-width="0.5"/></svg>
<svg class="ic" style="left:1147.0px;top:68.5px" width="20.0" height="20.0" viewBox="0 0 20 20"><rect x="0.6" y="1.0" width="5.8" height="5.6" fill="#00e0ff"/><rect x="7.199999999999999" y="1.0" width="5.8" height="5.6" fill="#ffe000"/><rect x="13.799999999999999" y="1.0" width="5.8" height="5.6" fill="#00f000"/><rect x="0.6" y="7.2" width="5.8" height="5.6" fill="#ff8a00"/><rect x="7.199999999999999" y="7.2" width="5.8" height="5.6" fill="#b06a00"/><rect x="13.799999999999999" y="7.2" width="5.8" height="5.6" fill="#ff00f0"/><rect x="0.6" y="13.4" width="5.8" height="5.6" fill="#0000f0"/><rect x="7.199999999999999" y="13.4" width="5.8" height="5.6" fill="#00a830"/><rect x="13.799999999999999" y="13.4" width="5.8" height="5.6" fill="#808080"/></svg>
<svg class="ic" style="left:1173.0px;top:68.5px" width="20.0" height="20.0" viewBox="0 0 20 20"><rect x="2.2" y="0.8" width="15.6" height="18.4" fill="url(#gSq)" stroke="#7a7e8a" stroke-width="0.9"/><rect x="4" y="2.4" width="12" height="1.5" fill="#5aa0f0"/><path d="M4.4 5.6h3.6M12.4 5.6h3.4" stroke="#f0b040" stroke-width="1.1"/><path d="M4.4 8h11.4" stroke="#a8d88a" stroke-width="1.2"/><rect x="5.0" y="9.6" width="2.6" height="2.4" fill="#00e0ff"/><rect x="8.2" y="9.6" width="2.6" height="2.4" fill="#ffe000"/><rect x="11.4" y="9.6" width="2.6" height="2.4" fill="#00f000"/><rect x="5.0" y="12.399999999999999" width="2.6" height="2.4" fill="#ff8a00"/><rect x="8.2" y="12.399999999999999" width="2.6" height="2.4" fill="#b06a00"/><rect x="11.4" y="12.399999999999999" width="2.6" height="2.4" fill="#ff00f0"/><rect x="5.0" y="15.2" width="2.6" height="2.4" fill="#0000f0"/><rect x="8.2" y="15.2" width="2.6" height="2.4" fill="#00a830"/><rect x="11.4" y="15.2" width="2.6" height="2.4" fill="#808080"/></svg>
<svg class="ic" style="left:1199.0px;top:68.5px" width="20.0" height="20.0" viewBox="0 0 20 20"><circle cx="10" cy="10" r="9.4" fill="#6a9a4a" stroke="#4a6a3a" stroke-width="0.7"/><circle cx="10" cy="10" r="7.6" fill="#8ab46a"/><ellipse cx="10" cy="14.6" rx="3.4" ry="2.6" fill="#c8c8b8"/><g transform="translate(2.4,2.2) scale(1.06)"><path d="M2 12.6L10.4 4.2" stroke="#f2f2f2" stroke-width="2.4" stroke-linecap="round"/><path d="M9.6 1.6a3 3 0 1 0 3.4 3.4l-2 0.4l-1.6-1.6z" fill="#f2f2f2" stroke="#888" stroke-width="0.3"/><path d="M2.4 3L10 10.6" stroke="#d8dadc" stroke-width="1.6"/><path d="M9.4 10l3 3" stroke="#3a7ad0" stroke-width="2.8" stroke-linecap="round"/><path d="M1.4 2l2 2" stroke="#9a9c9e" stroke-width="2"/></g></svg>
<svg class="ic" style="left:1225.0px;top:68.5px" width="20.0" height="20.0" viewBox="0 0 20 20"><rect x="0.8" y="1" width="18.6" height="18" fill="url(#gSq)" stroke="#5a6480" stroke-width="0.9"/><rect x="0.8" y="1" width="18.6" height="3.6" fill="#3a6ab8"/><path d="M5.6 7.4h12" stroke="#98b838" stroke-width="2" stroke-dasharray="2 1.2"/><path d="M3 6.6v11" stroke="#b06a30" stroke-width="1.7" stroke-dasharray="1.8 1.2"/><g transform="translate(6.4,7.8) scale(0.8)"><path d="M2 12.6L10.4 4.2" stroke="#d0d4dc" stroke-width="2.4" stroke-linecap="round"/><path d="M9.6 1.6a3 3 0 1 0 3.4 3.4l-2 0.4l-1.6-1.6z" fill="#d0d4dc" stroke="#888" stroke-width="0.3"/><path d="M2.4 3L10 10.6" stroke="#d8dadc" stroke-width="1.6"/><path d="M9.4 10l3 3" stroke="#5a8ad0" stroke-width="2.8" stroke-linecap="round"/><path d="M1.4 2l2 2" stroke="#9a9c9e" stroke-width="2"/></g></svg>
<svg class="ic" style="left:1251.0px;top:68.5px" width="20.0" height="20.0" viewBox="0 0 20 20"><path d="M1.2 2.6l1.3 -1.3l1.3 1.3l-1.3 1.3z" fill="#1c3a78"/><path d="M1.2 18l1.3 -1.3l1.3 1.3l-1.3 1.3z" fill="#1c3a78"/><path d="M5.6000000000000005 2.6l1.3 -1.3l1.3 1.3l-1.3 1.3z" fill="#1c3a78"/><path d="M5.6000000000000005 18l1.3 -1.3l1.3 1.3l-1.3 1.3z" fill="#1c3a78"/><path d="M10.0 2.6l1.3 -1.3l1.3 1.3l-1.3 1.3z" fill="#1c3a78"/><path d="M10.0 18l1.3 -1.3l1.3 1.3l-1.3 1.3z" fill="#1c3a78"/><path d="M14.4 2.6l1.3 -1.3l1.3 1.3l-1.3 1.3z" fill="#1c3a78"/><path d="M14.4 18l1.3 -1.3l1.3 1.3l-1.3 1.3z" fill="#1c3a78"/><path d="M18.8 2.6l1.3 -1.3l1.3 1.3l-1.3 1.3z" fill="#1c3a78"/><path d="M18.8 18l1.3 -1.3l1.3 1.3l-1.3 1.3z" fill="#1c3a78"/><path d="M1.2 6.5l1.3 -1.3l1.3 1.3l-1.3 1.3z" fill="#1c3a78"/><path d="M17.099999999999998 6.5l1.3 -1.3l1.3 1.3l-1.3 1.3z" fill="#1c3a78"/><path d="M1.2 10.4l1.3 -1.3l1.3 1.3l-1.3 1.3z" fill="#1c3a78"/><path d="M17.099999999999998 10.4l1.3 -1.3l1.3 1.3l-1.3 1.3z" fill="#1c3a78"/><path d="M1.2 14.299999999999999l1.3 -1.3l1.3 1.3l-1.3 1.3z" fill="#1c3a78"/><path d="M17.099999999999998 14.299999999999999l1.3 -1.3l1.3 1.3l-1.3 1.3z" fill="#1c3a78"/><path d="M4.6 10.4L11 4.4C13 2.6 16 2.4 19.4 3.4V8.4C17 9.4 15 9 13.4 11L11.4 9.4L6.4 11.6z" fill="#e0a860" stroke="#8a5a20" stroke-width="0.5"/><circle cx="6" cy="14.4" r="3.1" fill="#f0e020" stroke="#b0a010" stroke-width="0.5"/><path d="M3.8 14.4h4.4M6 12.2v4.4" stroke="#2a6ae0" stroke-width="1.3"/></svg>
<svg class="ic" style="left:1277.0px;top:68.5px" width="20.0" height="20.0" viewBox="0 0 20 20"><ellipse cx="12" cy="17" rx="7" ry="1.6" fill="url(#gShadow)"/><path d="M5.4 2.8L18 1.4L14.4 16.4L1.4 17.6z" fill="#e85050" stroke="#2a5ad0" stroke-width="1.5"/><path d="M8.6 2.6L4.8 17.2M11.8 2.2L8 17M15 1.8L11.4 16.6M4.4 6.6l12.4-1.2M3.4 10.6l12.4-1.2M2.4 14.4l12.6-1.2" stroke="#f4b0b0" stroke-width="0.8"/><path d="M8.8 12.6l6 -0.6l-0.8 3.6l-6 0.6z" fill="#333" opacity="0.6"/></svg>
<svg class="ic" style="left:6.0px;top:132.5px" width="22.0" height="22.0" viewBox="0 0 20 20"><path d="M8.040000000000001 10.959999999999999l-5.6 5.8" stroke="#8f9399" stroke-width="2.6" stroke-linecap="round"/><path d="M8.040000000000001 11.2l-5.2 5.4" stroke="#e6e8ea" stroke-width="1" stroke-linecap="round"/><circle cx="11.4" cy="7.6" r="4.8" fill="#cfe2f6" stroke="#9fb3cc" stroke-width="1.5"/><path d="M8.76 7.199999999999999a2.88 2.88 0 0 1 2.4 -2.64" fill="none" stroke="#fff" stroke-width="1" opacity="0.9"/><path d="M3.4 4.4c1,-1.6 2.4,-2.6 4,-3M2.6 8c0.2,-2 0.8,-3.4 2,-4.8M3 11.6c-0.6,-1.6 -0.6,-3 -0.2,-4.6" stroke="#b0bccf" stroke-width="1.1" fill="none"/></svg>
<svg class="ic" style="left:33.0px;top:132.5px" width="22.0" height="22.0" viewBox="0 0 20 20"><path d="M1.6 3l3 3M5.4 1L17.6 17.6M8.4 9.6L15.4 18.4" stroke="#3a7ad6" stroke-width="1.5"/><ellipse cx="9" cy="17.4" rx="6" ry="1.4" fill="url(#gShadow)"/><g transform="translate(4.6,16.6) rotate(-50)"><path d="M0 0l3 -1.6h10.5v3.2h-10.5z" fill="#e3a04a" stroke="#6a4210" stroke-width="0.5"/><path d="M0 0l3 -1.6v3.2z" fill="#f2dcb4" stroke="#6a4210" stroke-width="0.4"/><path d="M0 0l1.1 -0.6v1.2z" fill="#222"/><rect x="13.5" y="-1.6" width="1.2" height="3.2" fill="#c8c8c8"/><rect x="14.7" y="-1.6" width="2.2" height="3.2" rx="0.8" fill="#e03030"/><path d="M3 -0.3h10.4" stroke="#f4c680" stroke-width="0.8"/></g><path d="M13.4 1.4h5.4l-2.7 2.8z" fill="#000"/></svg>
<svg class="ic" style="left:6.0px;top:158.5px" width="22.0" height="22.0" viewBox="0 0 20 20"><rect x="4" y="4.2" width="12.4" height="10.8" fill="url(#gSq)" stroke="#8a8e96" stroke-width="1.1"/><path d="M2.3 2.5l3.4 3.4M5.7 2.5l-3.4 3.4" stroke="#35b52a" stroke-width="1.7"/><path d="M14.7 2.5l3.4 3.4M18.099999999999998 2.5l-3.4 3.4" stroke="#35b52a" stroke-width="1.7"/><path d="M2.3 13.3l3.4 3.4M5.7 13.3l-3.4 3.4" stroke="#35b52a" stroke-width="1.7"/><path d="M14.7 13.3l3.4 3.4M18.099999999999998 13.3l-3.4 3.4" stroke="#35b52a" stroke-width="1.7"/></svg>
<svg class="ic" style="left:33.0px;top:158.5px" width="22.0" height="22.0" viewBox="0 0 20 20"><path d="M6.6 2.6C1 2 0.6 8.4 6 9.6C12 10.6 18 10 17.4 14.4C16.8 18.4 10.4 17.6 9.4 14" stroke="#3a7ad6" stroke-width="1.6" fill="none"/><ellipse cx="9" cy="17.4" rx="6" ry="1.4" fill="url(#gShadow)"/><g transform="translate(4.8,15.6) rotate(-50)"><path d="M0 0l3 -1.6h10.5v3.2h-10.5z" fill="#e3a04a" stroke="#6a4210" stroke-width="0.5"/><path d="M0 0l3 -1.6v3.2z" fill="#f2dcb4" stroke="#6a4210" stroke-width="0.4"/><path d="M0 0l1.1 -0.6v1.2z" fill="#222"/><rect x="13.5" y="-1.6" width="1.2" height="3.2" fill="#c8c8c8"/><rect x="14.7" y="-1.6" width="2.2" height="3.2" rx="0.8" fill="#e03030"/><path d="M3 -0.3h10.4" stroke="#f4c680" stroke-width="0.8"/></g><path d="M13.4 1.4h5.4l-2.7 2.8z" fill="#000"/></svg>
<svg class="ic" style="left:6.0px;top:184.0px" width="22.0" height="22.0" viewBox="0 0 20 20"><g transform="translate(9.4,8.4) scale(0.9)"><path d="M0 2.6L5 0L10 2.6L5 5.2z" fill="#a8aaac" stroke="#333" stroke-width="0.5"/><path d="M0 2.6L5 5.2V11.6L0 8.6z" fill="#6a6c6e" stroke="#333" stroke-width="0.5"/><path d="M10 2.6L5 5.2V11.6L10 8.6z" fill="#3a3c3e" stroke="#333" stroke-width="0.5"/></g><path d="M6.78 9.620000000000001l-5.6 5.8" stroke="#8f9399" stroke-width="2.6" stroke-linecap="round"/><path d="M6.78 9.85l-5.2 5.4" stroke="#e6e8ea" stroke-width="1" stroke-linecap="round"/><circle cx="10" cy="6.4" r="4.6" fill="#cfe2f6" stroke="#9fb3cc" stroke-width="1.5"/><path d="M7.470000000000001 6.0a2.76 2.76 0 0 1 2.3 -2.53" fill="none" stroke="#fff" stroke-width="1" opacity="0.9"/><path d="M8.4 4v4.8l4 -2.4z" fill="#a8c0dc" stroke="#7a90b0" stroke-width="0.5"/><path d="M0.6 2.6h4M2.6 0.6v4M0.6 6h4" stroke="#000" stroke-width="1"/><path d="M14.8 1.4h5.4l-2.7 2.8z" fill="#000"/></svg>
<svg class="ic" style="left:33.0px;top:184.0px" width="22.0" height="22.0" viewBox="0 0 20 20"><path d="M1.6 2.6H16.4V9.6H13.4V17.6H1.6z" fill="none" stroke="#f0f000" stroke-width="1.7"/><path d="M1.6 2.6H16.4V9.6H13.4V17.6H1.6z" fill="none" stroke="#8a8a00" stroke-width="0.4"/><path d="M4.6 9L8 14L14.6 5" stroke="#4cc040" stroke-width="2.8" fill="none" stroke-linejoin="round"/><path d="M13.4 1.4h5.4l-2.7 2.8z" fill="#000"/></svg>
<svg class="ic" style="left:6.0px;top:210.0px" width="22.0" height="22.0" viewBox="0 0 20 20"><g transform="translate(0.6,0.8) scale(1.0)"><path d="M0 10L8.5 5.4L17 9.4L9 15z" fill="#e4ecf8" stroke="#aab4c8" stroke-width="0.6"/><path d="M5 12.4V3" stroke="#1a6ae0" stroke-width="1.7"/><path d="M5 0.2L7.6 4H2.4z" fill="#1a6ae0"/><path d="M5 12.4L11.6 7.6" stroke="#2cae2c" stroke-width="1.7"/><path d="M14 5.8L12.9 9.6L9.8 6.6z" fill="#2cae2c"/><path d="M5 12.4L11 16" stroke="#e02020" stroke-width="1.7"/><path d="M13.6 17.6L9.4 17.2L11.6 14z" fill="#e02020"/><circle cx="5" cy="12.4" r="1.8" fill="#e8e8e8" stroke="#555" stroke-width="0.5"/></g><path d="M14.8 1.4h5.4l-2.7 2.8z" fill="#000"/></svg>
<svg class="ic" style="left:33.0px;top:210.0px" width="22.0" height="22.0" viewBox="0 0 20 20"><path d="M1.6 10C2 0 7 -1 9 8C11 19 16.4 19 17.4 9" stroke="#3a7ad6" stroke-width="1.6" fill="none"/><ellipse cx="9" cy="17.4" rx="6" ry="1.4" fill="url(#gShadow)"/><g transform="translate(4.6,15.6) rotate(-50)"><path d="M0 0l3 -1.6h10.5v3.2h-10.5z" fill="#e3a04a" stroke="#6a4210" stroke-width="0.5"/><path d="M0 0l3 -1.6v3.2z" fill="#f2dcb4" stroke="#6a4210" stroke-width="0.4"/><path d="M0 0l1.1 -0.6v1.2z" fill="#222"/><rect x="13.5" y="-1.6" width="1.2" height="3.2" fill="#c8c8c8"/><rect x="14.7" y="-1.6" width="2.2" height="3.2" rx="0.8" fill="#e03030"/><path d="M3 -0.3h10.4" stroke="#f4c680" stroke-width="0.8"/></g><path d="M13.4 1.4h5.4l-2.7 2.8z" fill="#000"/></svg>
<svg class="ic" style="left:6.0px;top:236.0px" width="22.0" height="22.0" viewBox="0 0 20 20"><g transform="translate(0.4,0.8)"><path d="M2 3.4l6 -2l7 1.2l-6 2.2z" fill="#7a8af0" stroke="#4858c8" stroke-width="0.4"/><path d="M2 5.8l6 -2l7 1.2l-6 2.2z" fill="#d8dcf8" stroke="#8890c0" stroke-width="0.4"/><path d="M2 8.2l6 -2l7 1.2l-6 2.2z" fill="#f2f2f2" stroke="#8a8a8a" stroke-width="0.4"/><ellipse cx="10.4" cy="14" rx="6.6" ry="4.4" fill="#d09a78" stroke="#7a4a30" stroke-width="0.6"/><circle cx="7" cy="15" r="1.5" fill="#1a4af0"/><circle cx="10.6" cy="15.8" r="1.5" fill="#1ab01a"/><circle cx="13.6" cy="13.2" r="1.5" fill="#e02020"/><path d="M9.6 12.6L17.4 2" stroke="#b06820" stroke-width="1.5"/><path d="M8.6 14L10.4 11.6" stroke="#e8e8e8" stroke-width="1.6"/></g><path d="M14.8 1.4h5.4l-2.7 2.8z" fill="#000"/></svg>
<svg class="ic" style="left:33.0px;top:236.0px" width="22.0" height="22.0" viewBox="0 0 20 20"><ellipse cx="10" cy="18" rx="7" ry="1.4" fill="url(#gShadow)"/><path d="M5.4 4L17 1L14 15.6L1.4 18z" fill="#9cc4f4" stroke="#2a5ad0" stroke-width="1.5"/><path d="M11.4 2.6L7.6 16.8M3.6 10.6l11.8-2.8" stroke="#e8f2ff" stroke-width="1.3"/><path d="M13.4 1.4h5.4l-2.7 2.8z" fill="#000"/></svg>
<svg class="ic" style="left:6.0px;top:262.0px" width="22.0" height="22.0" viewBox="0 0 20 20"><g transform="translate(1.4,2) scale(1.0)"><path d="M1 8C1 2.4 8.4 0.4 12.4 4L14.6 1.8V8.8H7.6L9.8 6.6C7.6 4.6 4.6 5.4 4 8z" fill="url(#gRb)" stroke="#3a6ab0" stroke-width="0.6"/><path d="M15.4 9C15.4 14.6 8 16.6 4 13L1.8 15.2V8.2H8.8L6.6 10.4C8.8 12.4 11.8 11.6 12.4 9z" fill="url(#gRb)" stroke="#3a6ab0" stroke-width="0.6"/></g><path d="M14.8 1.4h5.4l-2.7 2.8z" fill="#000"/></svg>
<svg class="ic" style="left:33.0px;top:262.0px" width="22.0" height="22.0" viewBox="0 0 20 20"><ellipse cx="11" cy="17.6" rx="7" ry="1.5" fill="url(#gShadow)"/><g transform="translate(1.6,1.4) scale(1.4)"><path d="M0 2.6L5 0L10 2.6L5 5.2z" fill="#e4e4e2" stroke="#333" stroke-width="0.5"/><path d="M0 2.6L5 5.2V11.6L0 8.6z" fill="#8a8c88" stroke="#333" stroke-width="0.5"/><path d="M10 2.6L5 5.2V11.6L10 8.6z" fill="#5a5c58" stroke="#333" stroke-width="0.5"/></g><path d="M13.4 1.4h5.4l-2.7 2.8z" fill="#000"/></svg>
<svg class="ic" style="left:6.0px;top:288.0px" width="22.0" height="22.0" viewBox="0 0 20 20"><ellipse cx="10" cy="17" rx="6.6" ry="1.6" fill="url(#gShadow)"/><path d="M5.8 6.4C5.8 0.8 14.8 0.8 14.8 5.6C14.8 8.8 10.6 9 10.4 12.4" stroke="#3a6ad0" stroke-width="3" fill="none" stroke-linecap="round"/><path d="M6.2 5.6C6.8 2 13.4 1.8 13.8 5" stroke="#9cc0f4" stroke-width="1" fill="none"/><circle cx="10.4" cy="16" r="1.6" fill="#6a9ae8" stroke="#3a6ad0" stroke-width="0.6"/><path d="M14.8 1.4h5.4l-2.7 2.8z" fill="#000"/></svg>
<svg class="ic" style="left:33.0px;top:288.0px" width="22.0" height="22.0" viewBox="0 0 20 20"><path d="M2.6 3v14M17.4 3v14" stroke="#55584a" stroke-width="1.3"/><path d="M4 6.4h12" stroke="#e8e000" stroke-width="1.5"/><path d="M2.8 6.4l3.4 -2.2v4.4zM17.2 6.4l-3.4 -2.2v4.4z" fill="#e8e000" stroke="#8a8600" stroke-width="0.3"/><path d="M13.4 1.4h5.4l-2.7 2.8z" fill="#000"/></svg>
<svg class="ic" style="left:6.0px;top:314.0px" width="22.0" height="22.0" viewBox="0 0 20 20"><ellipse cx="11" cy="17.6" rx="6.6" ry="1.5" fill="url(#gShadow)"/><path d="M3.4 5.6L5.2 17.4H13.4L15.2 5.6z" fill="#a8d0ec" stroke="#4a7aa8" stroke-width="0.8"/><ellipse cx="9.3" cy="5.6" rx="6" ry="1.9" fill="#7aa8d0" stroke="#4a7aa8" stroke-width="0.8"/><path d="M7.4 8l4 3l-4 3l4 2.4" stroke="#e0f0a0" stroke-width="1.2" fill="none"/><path d="M8 5l1.4 -3.4l1.6 3.4z" fill="#f0e020" stroke="#8a8000" stroke-width="0.4"/><path d="M14.8 1.4h5.4l-2.7 2.8z" fill="#000"/></svg>
<svg class="ic" style="left:33.0px;top:314.0px" width="22.0" height="22.0" viewBox="0 0 20 20"><ellipse cx="10" cy="17.4" rx="7.6" ry="1.8" fill="url(#gShadow)"/><g transform="translate(3,1.4) scale(1.0,1.0)"><path d="M0 5.4L6.6 0V3.2C12.4 3.2 14.6 8 11.4 13.4C9.4 16 6.4 15.6 6.4 15.6C10 13.4 9.8 7.8 6.6 7.8V11z" fill="url(#gGr)" stroke="#808488" stroke-width="0.5"/></g><path d="M13.4 1.4h5.4l-2.7 2.8z" fill="#000"/></svg>
<svg class="ic" style="left:6.0px;top:340.0px" width="22.0" height="22.0" viewBox="0 0 20 20"><rect x="1" y="0.6" width="2.8" height="12" fill="#8a949c" stroke="#3a4248" stroke-width="0.5"/><path d="M1 12.6l1.4 3.6l1.4 -3.6z" fill="#d8b020"/><g stroke="#a04a20" stroke-width="1.1" fill="none"><circle cx="11.4" cy="8" r="4.6"/><path d="M11.4 0.6v14.8M4 8h14.8M6.2 2.8l10.4 10.4M16.6 2.8L6.2 13.2"/></g><circle cx="11.4" cy="8" r="1.7" fill="#f0b020"/><path d="M1.4 16.6l6 -2.4l11 1.6l-6.4 3z" fill="none" stroke="#f08a10" stroke-width="1.4"/><path d="M5 15.6l7.4 2.4M9 14.6l6 2.4M4 17.6l9 -2" stroke="#f08a10" stroke-width="1"/><path d="M14.8 1.4h5.4l-2.7 2.8z" fill="#000"/></svg>
<svg class="ic" style="left:33.0px;top:340.0px" width="22.0" height="22.0" viewBox="0 0 20 20"><path d="M3.6 10.4H14.6L18.6 14V19.4H3.6z" fill="url(#gSq)" stroke="#222" stroke-width="1"/><rect x="5.4" y="15.6" width="4.4" height="2.6" fill="#fff" stroke="#444" stroke-width="0.5"/><g transform="rotate(-8 9 9)"><g transform="translate(1.4,2) scale(0.92)"><path d="M0.6 3.2L2 1.4H6L7.2 3.2H13V14.6H0.6z" fill="#f0c860" stroke="#b08a28" stroke-width="0.6"/><path d="M0.6 14.6L3.4 6.4H16.4L13 14.6z" fill="#fadf8a" stroke="#b08a28" stroke-width="0.6"/></g></g><path d="M7.4 6.4C8 2.6 12 1.6 14 3.8L15.2 2.4L16.4 7.6L11.6 6.8L12.8 5.4C11.4 4 9.6 4.6 9.2 6.6z" fill="#2cae2c" stroke="#167016" stroke-width="0.4"/></svg>
<div class="vbtn" style="left:64px;top:113px"></div>
<div class="vbtn" style="left:92px;top:113px"></div>
<div class="vbtn" style="left:120px;top:113px"></div>
<div class="vbtn" style="left:148px;top:113px"></div>
<div class="vbtn" style="left:176px;top:113px"></div>
<div class="vbtn" style="left:204px;top:113px"></div>
<div class="vbtn" style="left:232px;top:113px"></div>
<div class="vbtn" style="left:260px;top:113px"></div>
<div class="vbtn" style="left:288px;top:113px"></div>
<div class="vbtn" style="left:316px;top:113px"></div>
<div class="vbtn" style="left:344px;top:113px"></div>
<div class="vbtn" style="left:64px;top:141px"></div>
<div class="vbtn" style="left:64px;top:169px"></div>
<div class="vbtn" style="left:64px;top:197px;background:#8a8e9c;border:1.5px solid #e0c060"></div>
<div class="vbtn" style="left:64px;top:225px"></div>
<div class="vbtn" style="left:64px;top:253px"></div>
<svg class="ic" style="left:64.0px;top:113.0px" width="24.0" height="24.0" viewBox="0 0 24 24"><rect x="3.2" y="3.9" width="17.8" height="4" fill="#46608e"/><rect x="3.2" y="3.9" width="17.8" height="0.9" fill="#6a80a8"/><rect x="3.2" y="7.0" width="17.8" height="0.9" fill="#6a80a8"/><rect x="3.2" y="10" width="17.8" height="4" fill="#46608e"/><rect x="3.2" y="10" width="17.8" height="0.9" fill="#6a80a8"/><rect x="3.2" y="13.1" width="17.8" height="0.9" fill="#6a80a8"/><rect x="3.2" y="16.1" width="17.8" height="4" fill="#46608e"/><rect x="3.2" y="16.1" width="17.8" height="0.9" fill="#6a80a8"/><rect x="3.2" y="19.200000000000003" width="17.8" height="0.9" fill="#6a80a8"/></svg>
<svg class="ic" style="left:92.0px;top:113.0px" width="24.0" height="24.0" viewBox="0 0 24 24"><rect x="6.6" y="7.8" width="12" height="9.6" fill="url(#gSq)" stroke="#70747e" stroke-width="1.1"/><path d="M6.2 7.4L2.6 3.8000000000000003" stroke="#35b52a" stroke-width="1.8"/><path d="M6.8 8.0L2.8000000000000003 7.4L6.2 4.0z" fill="#35b52a"/><path d="M2.4000000000000004 3.6000000000000005L5.0 3.6000000000000005M2.4000000000000004 3.6000000000000005L2.4000000000000004 6.2" stroke="#35b52a" stroke-width="1.3"/><path d="M19 7.4L22.6 3.8000000000000003" stroke="#35b52a" stroke-width="1.8"/><path d="M18.4 8.0L22.4 7.4L19.0 4.0z" fill="#35b52a"/><path d="M22.8 3.6000000000000005L20.2 3.6000000000000005M22.8 3.6000000000000005L22.8 6.2" stroke="#35b52a" stroke-width="1.3"/><path d="M6.2 17.8L2.6 21.400000000000002" stroke="#35b52a" stroke-width="1.8"/><path d="M6.8 17.2L2.8000000000000003 17.8L6.2 21.2z" fill="#35b52a"/><path d="M2.4000000000000004 21.6L5.0 21.6M2.4000000000000004 21.6L2.4000000000000004 19.0" stroke="#35b52a" stroke-width="1.3"/><path d="M19 17.8L22.6 21.400000000000002" stroke="#35b52a" stroke-width="1.8"/><path d="M18.4 17.2L22.4 17.8L19.0 21.2z" fill="#35b52a"/><path d="M22.8 21.6L20.2 21.6M22.8 21.6L22.8 19.0" stroke="#35b52a" stroke-width="1.3"/></svg>
<svg class="ic" style="left:120.0px;top:113.0px" width="24.0" height="24.0" viewBox="0 0 24 24"><path d="M7.4 6.4c1.2,-1.8 3,-3 5,-3.4M6 9.4c0.4,-2 1.4,-3.6 3,-5M6.4 13c-0.8,-1.8 -0.8,-3.6 -0.2,-5.4" stroke="#b4c0d4" stroke-width="1.3" fill="none"/><path d="M6 13.6l-1.6 1.8M7.4 16l-2.2 2.2" stroke="#c8ccd4" stroke-width="1.4"/><path d="M11.9 14.9l-5.6 5.8" stroke="#8f9399" stroke-width="2.6" stroke-linecap="round"/><path d="M11.9 15.15l-5.2 5.4" stroke="#e6e8ea" stroke-width="1" stroke-linecap="round"/><circle cx="15.4" cy="11.4" r="5.0" fill="#cfe2f6" stroke="#9fb3cc" stroke-width="1.5"/><path d="M12.65 11.0a3.0 3.0 0 0 1 2.5 -2.75" fill="none" stroke="#fff" stroke-width="1" opacity="0.9"/></svg>
<svg class="ic" style="left:148.0px;top:113.0px" width="24.0" height="24.0" viewBox="0 0 24 24"><path d="M2.4 13.4L13.4 5.4L21.6 10L15 21z" fill="none" stroke="#6e7288" stroke-width="0.8"/><path d="M10.8 14.4V5" stroke="#1a78f0" stroke-width="2.2"/><path d="M10.8 2.6L13.4 7H8.2z" fill="#1a78f0"/><path d="M10.8 14.6L17.6 10.2" stroke="#38c030" stroke-width="1.9"/><path d="M20.6 8.2l-1.2 3.8l-3.2-3z" fill="#38c030"/><path d="M10.8 14.6L17 19.4" stroke="#e02828" stroke-width="2.2"/><path d="M19.8 21.4l-4.6-0.6l2.4-3.4z" fill="#e02828"/><circle cx="10.8" cy="14.6" r="1.9" fill="#f0f0f0" stroke="#444" stroke-width="0.5"/></svg>
<svg class="ic" style="left:176.0px;top:113.0px" width="24.0" height="24.0" viewBox="0 0 24 24"><path d="M12.4 3L12.4 12.2 M3.3 16L12.4 12.2 M21.5 16L12.4 12.2" stroke="#000" stroke-width="1.3" stroke-linejoin="round" stroke-linecap="round" fill="none"/><polygon points="3.3,6.4 12.4,3 21.5,6.8 12.4,10.8" fill="url(#gGreenCube2)"/><path d="M3.3 6.4L12.4 3 M12.4 3L21.5 6.8 M21.5 6.8L12.4 10.8 M12.4 10.8L3.3 6.4 M3.3 6.4L3.3 16 M21.5 6.8L21.5 16 M12.4 10.8L12.4 21.4 M3.3 16L12.4 21.4 M12.4 21.4L21.5 16" stroke="#000" stroke-width="1.3" stroke-linejoin="round" stroke-linecap="round" fill="none"/></svg>
<svg class="ic" style="left:204.0px;top:113.0px" width="24.0" height="24.0" viewBox="0 0 24 24"><polygon points="3.3,16 12.4,12.2 21.5,16 12.4,21.4" fill="url(#gGreenCube2)"/><path d="M12.4 3L12.4 12.2 M3.3 16L12.4 12.2 M21.5 16L12.4 12.2 M3.3 6.4L12.4 3 M12.4 3L21.5 6.8 M21.5 6.8L12.4 10.8 M12.4 10.8L3.3 6.4 M3.3 6.4L3.3 16 M21.5 6.8L21.5 16 M12.4 10.8L12.4 21.4 M3.3 16L12.4 21.4 M12.4 21.4L21.5 16" stroke="#000" stroke-width="1.3" stroke-linejoin="round" stroke-linecap="round" fill="none"/></svg>
<svg class="ic" style="left:232.0px;top:113.0px" width="24.0" height="24.0" viewBox="0 0 24 24"><polygon points="3.3,6.4 12.4,3 12.4,12.2 3.3,16" fill="url(#gGreenCube2)"/><path d="M12.4 3L12.4 12.2 M3.3 16L12.4 12.2 M21.5 16L12.4 12.2 M3.3 6.4L12.4 3 M12.4 3L21.5 6.8 M21.5 6.8L12.4 10.8 M12.4 10.8L3.3 6.4 M3.3 6.4L3.3 16 M21.5 6.8L21.5 16 M12.4 10.8L12.4 21.4 M3.3 16L12.4 21.4 M12.4 21.4L21.5 16" stroke="#000" stroke-width="1.3" stroke-linejoin="round" stroke-linecap="round" fill="none"/></svg>
<svg class="ic" style="left:260.0px;top:113.0px" width="24.0" height="24.0" viewBox="0 0 24 24"><path d="M12.4 3L12.4 12.2 M3.3 16L12.4 12.2 M21.5 16L12.4 12.2" stroke="#000" stroke-width="1.3" stroke-linejoin="round" stroke-linecap="round" fill="none"/><polygon points="12.4,10.8 21.5,6.8 21.5,16 12.4,21.4" fill="url(#gGreenCube2)"/><path d="M3.3 6.4L12.4 3 M12.4 3L21.5 6.8 M21.5 6.8L12.4 10.8 M12.4 10.8L3.3 6.4 M3.3 6.4L3.3 16 M21.5 6.8L21.5 16 M12.4 10.8L12.4 21.4 M3.3 16L12.4 21.4 M12.4 21.4L21.5 16" stroke="#000" stroke-width="1.3" stroke-linejoin="round" stroke-linecap="round" fill="none"/></svg>
<svg class="ic" style="left:288.0px;top:113.0px" width="24.0" height="24.0" viewBox="0 0 24 24"><path d="M12.4 3L12.4 12.2 M3.3 16L12.4 12.2 M21.5 16L12.4 12.2" stroke="#000" stroke-width="1.3" stroke-linejoin="round" stroke-linecap="round" fill="none"/><polygon points="3.3,6.4 12.4,10.8 12.4,21.4 3.3,16" fill="url(#gGreenCube2)"/><path d="M3.3 6.4L12.4 3 M12.4 3L21.5 6.8 M21.5 6.8L12.4 10.8 M12.4 10.8L3.3 6.4 M3.3 6.4L3.3 16 M21.5 6.8L21.5 16 M12.4 10.8L12.4 21.4 M3.3 16L12.4 21.4 M12.4 21.4L21.5 16" stroke="#000" stroke-width="1.3" stroke-linejoin="round" stroke-linecap="round" fill="none"/></svg>
<svg class="ic" style="left:316.0px;top:113.0px" width="24.0" height="24.0" viewBox="0 0 24 24"><polygon points="12.4,3 21.5,6.8 21.5,16 12.4,12.2" fill="url(#gGreenCube2)"/><path d="M12.4 3L12.4 12.2 M3.3 16L12.4 12.2 M21.5 16L12.4 12.2 M3.3 6.4L12.4 3 M12.4 3L21.5 6.8 M21.5 6.8L12.4 10.8 M12.4 10.8L3.3 6.4 M3.3 6.4L3.3 16 M21.5 6.8L21.5 16 M12.4 10.8L12.4 21.4 M3.3 16L12.4 21.4 M12.4 21.4L21.5 16" stroke="#000" stroke-width="1.3" stroke-linejoin="round" stroke-linecap="round" fill="none"/></svg>
<svg class="ic" style="left:344.0px;top:113.0px" width="24.0" height="24.0" viewBox="0 0 24 24"><polygon points="3.3,6.4 12.4,3 21.5,6.8 12.4,10.8" fill="#5fe048"/><polygon points="3.3,6.4 12.4,10.8 12.4,21.4 3.3,16" fill="#2cb820"/><polygon points="12.4,10.8 21.5,6.8 21.5,16 12.4,21.4" fill="url(#gGreenCube2)"/><path d="M3.3 6.4L12.4 3 M12.4 3L21.5 6.8 M21.5 6.8L12.4 10.8 M12.4 10.8L3.3 6.4 M3.3 6.4L3.3 16 M21.5 6.8L21.5 16 M12.4 10.8L12.4 21.4 M3.3 16L12.4 21.4 M12.4 21.4L21.5 16" stroke="#128a0c" stroke-width="1.2" fill="none" stroke-linejoin="round"/></svg>
<svg class="ic" style="left:66.6px;top:143.0px" width="20.0" height="20.0" viewBox="0 0 20 20"><path d="M5 4.4v11.4a5.0 2.0 0 0 0 10 0v-11.4" fill="none" stroke="#0a0a0a" stroke-width="1.1"/><ellipse cx="10.0" cy="4.4" rx="5.0" ry="2.0" fill="none" stroke="#0a0a0a" stroke-width="1.1"/><path d="M5 15.6a5 2 0 0 1 10 0" fill="none" stroke="#444" stroke-width="0.6"/></svg>
<svg class="ic" style="left:66.6px;top:171.0px" width="20.0" height="20.0" viewBox="0 0 20 20"><path d="M5 4.4v11.4a5.0 2.0 0 0 0 10 0v-11.4" fill="none" stroke="#0a0a0a" stroke-width="1.1"/><ellipse cx="10.0" cy="4.4" rx="5.0" ry="2.0" fill="none" stroke="#0a0a0a" stroke-width="1.1"/></svg>
<svg class="ic" style="left:66.6px;top:199.0px" width="20.0" height="20.0" viewBox="0 0 20 20"><path d="M5 4.4v11.4a5.0 2.0 0 0 0 10 0v-11.4" fill="url(#gCylB)" stroke="#14204a" stroke-width="0.9"/><ellipse cx="10.0" cy="4.4" rx="5.0" ry="2.0" fill="#a8c4f0" stroke="#14204a" stroke-width="0.9"/></svg>
<svg class="ic" style="left:66.6px;top:227.0px" width="20.0" height="20.0" viewBox="0 0 20 20"><path d="M5 4.4v11.4a5.0 2.0 0 0 0 10 0v-11.4" fill="url(#gCylL)" stroke="#5a6680" stroke-width="0.9"/><ellipse cx="10.0" cy="4.4" rx="5.0" ry="2.0" fill="#e6ecf8" stroke="#5a6680" stroke-width="0.9"/></svg>
<svg class="ic" style="left:66.6px;top:255.0px" width="20.0" height="20.0" viewBox="0 0 20 20"><path d="M5.4 4.28v11.64a4.7 1.8800000000000001 0 0 0 9.4 0v-11.64" fill="#8a8e9c" stroke="#222" stroke-width="0.9"/><ellipse cx="10.100000000000001" cy="4.28" rx="4.7" ry="1.8800000000000001" fill="#8a8e9c" stroke="#222" stroke-width="0.9"/><path d="M7.4 5.4l2 11M9.8 5.8l-1.4 11M11.6 5.8l1.6 10.6M13.2 5.4l-2.6 11.4" stroke="#222" stroke-width="0.6" fill="none"/></svg>
<svg class="ic" style="left:1180.5px;top:1020.5px" width="20.0" height="20.0" viewBox="0 0 20 20"><rect x="2" y="2" width="16" height="16" fill="#e8b8c0" stroke="#6a6a72" stroke-width="1.3"/><g opacity="0.95"><g transform="translate(4,4) scale(0.74)"><path d="M1 8C1 2.4 8.4 0.4 12.4 4L14.6 1.8V8.8H7.6L9.8 6.6C7.6 4.6 4.6 5.4 4 8z" fill="#e05a68" stroke="#b03040" stroke-width="0.6"/><path d="M15.4 9C15.4 14.6 8 16.6 4 13L1.8 15.2V8.2H8.8L6.6 10.4C8.8 12.4 11.8 11.6 12.4 9z" fill="#e05a68" stroke="#b03040" stroke-width="0.6"/></g></g></svg>
<div class="abs" style="left:1212px;top:1022px;width:18px;height:17px;background:#ffe48c"></div>
<svg class="ic" style="left:1211.0px;top:1020.5px" width="20.0" height="20.0" viewBox="0 0 20 20"><path d="M5.4 1l1.4 3.6l3.4-2l-0.6 3.8l3.8 0.4l-3 2.4l2.4 3l-3.8-0.4l-0.6 3.8l-2.6-2.8l-2.6 2.8l-0.2-3.8L-0.6 11l3-2.4l-2.6-2.6l3.8-0.2z" fill="#e070c8" opacity="0.85"/><path d="M7 6.4L16 13.4L12.4 13.6L14.6 18L12.6 18.8L10.6 14.6L8 17z" fill="#e8e0d0" stroke="#7a6a40" stroke-width="0.7"/></svg>
<svg class="ic" style="left:1242.5px;top:1020.5px" width="20.0" height="20.0" viewBox="0 0 20 20"><path d="M4.4 8.6L10.6 5L16.6 7.6L16 10L10.4 13z" fill="#e8b070" stroke="#8a5a20" stroke-width="0.6"/><path d="M6 7.6l8.6-3l2.4 1.4" stroke="#c88a40" stroke-width="2" fill="none"/><rect x="4" y="9.6" width="8.4" height="8.4" fill="#d0dcf4" stroke="#3a5aa8" stroke-width="0.9"/><path d="M6.2 11.4v5M8.2 11.4v5M10.2 11.4v5M5 14h6.4" stroke="#3a5aa8" stroke-width="0.8"/></svg>
<svg class="ic" style="left:1273.0px;top:1020.5px" width="20.0" height="20.0" viewBox="0 0 20 20"><ellipse cx="10.4" cy="17.6" rx="6" ry="1.4" fill="url(#gShadow)"/><path d="M6.4 6.6C6.4 1.4 14.4 1.4 14.4 5.8C14.4 8.8 10.6 9 10.4 12" stroke="#3a6ad0" stroke-width="2.7" fill="none" stroke-linecap="round"/><path d="M6.8 5.8C7.2 2.4 13.2 2.4 13.6 5.2" stroke="#9cc0f4" stroke-width="0.9" fill="none"/><circle cx="10.4" cy="15.4" r="1.5" fill="#6a9ae8" stroke="#3a6ad0" stroke-width="0.5"/></svg>
<svg class="ic" style="left:1304.5px;top:1020.5px" width="20.0" height="20.0" viewBox="0 0 20 20"><g transform="translate(4,1) scale(0.85)"><path d="M0 2.6L5 0L10 2.6L5 5.2z" fill="#8ab4f0" stroke="#333" stroke-width="0.5"/><path d="M0 2.6L5 5.2V11.6L0 8.6z" fill="#4a7ad8" stroke="#333" stroke-width="0.5"/><path d="M10 2.6L5 5.2V11.6L10 8.6z" fill="#2a4aa0" stroke="#333" stroke-width="0.5"/></g><g transform="translate(9.6,7.4) scale(0.92)"><path d="M0 2.6L5 0L10 2.6L5 5.2z" fill="#c8ccd0" stroke="#333" stroke-width="0.5"/><path d="M0 2.6L5 5.2V11.6L0 8.6z" fill="#7a8a98" stroke="#333" stroke-width="0.5"/><path d="M10 2.6L5 5.2V11.6L10 8.6z" fill="#3a4a58" stroke="#333" stroke-width="0.5"/></g><path d="M0.6 10.4h6M0.6 13.4l5.6-2M1.4 16l5-4.4" stroke="#f01010" stroke-width="1.4"/><path d="M9 11.6l-3.6-2.4v4.8z" fill="#f01010"/></svg>
<div class="abs" style="left:1337px;top:1022px;width:17px;height:17px;background:#ffe48c"></div>
<svg class="ic" style="left:1335.5px;top:1020.5px" width="20.0" height="20.0" viewBox="0 0 20 20"><path d="M2 5.6L10 2.4L18 5.6L10 8.8z" fill="#e040e8" stroke="#5a1a6a" stroke-width="0.7"/><path d="M2 5.6L10 8.8V18L3.4 14z" fill="#7ab0c0" stroke="#24404a" stroke-width="0.7"/><path d="M18 5.6L10 8.8V18L16.6 14z" fill="#5a8a98" stroke="#24404a" stroke-width="0.7"/></svg>
<svg class="ic" style="left:1365.5px;top:1020.5px" width="20.0" height="20.0" viewBox="0 0 20 20"><rect x="4" y="6" width="11" height="12" fill="#f4f4f4" stroke="#555" stroke-width="1"/></svg>
<svg class="ic" style="left:1397.5px;top:1020.5px" width="20.0" height="20.0" viewBox="0 0 20 20"><circle cx="10" cy="10" r="7.6" fill="#f6f6f6" stroke="#2a9a2a" stroke-width="2"/><path d="M10 6v5l3 2" stroke="#2a4a9a" stroke-width="1.3" fill="none"/></svg>
<svg class="ic" style="left:1428.0px;top:1020.5px" width="20.0" height="20.0" viewBox="0 0 20 20"><rect x="2" y="5" width="7.4" height="13" fill="#f4f4f4" stroke="#555" stroke-width="1"/><rect x="10.6" y="5" width="7.4" height="13" fill="#f4f4f4" stroke="#555" stroke-width="1"/></svg>
<svg class="ic" style="left:1890.5px;top:999.5px" width="20.0" height="20.0" viewBox="0 0 20 20"><circle cx="10" cy="10" r="6.6" fill="#0a10e0" stroke="#06084a" stroke-width="0.7"/><path d="M5 13.6a6.4 6.4 0 0 0 10.4 0.4z" fill="#060a90"/><path d="M6 6.4c2,-2 4,-1.6 5,-0.4c0.6,1.6 -1,2 -1.4,3.6c-1.4,1 -2,3 -3.4,2.4c-1,-1.6 -1.4,-4 -0.2,-5.6zM12.4 9.4c1.4,-0.6 3,0.4 3.4,1.6c-0.4,1.6 -1.4,3 -2.6,3.6c-0.8,-1.4 -1.6,-3.4 -0.8,-5.2z" fill="#10c818"/><path d="M11 4.4l3 -0.4l1.6 2l-2.4 2z" fill="#10c818"/></svg>
<div class="abs" style="left:1337px;top:1004px;width:5px;height:14px;background-image:radial-gradient(#a8adbc 0.8px,transparent 1px);background-size:2.5px 2.5px"></div>
<div class="abs" style="left:1476px;top:1004px;width:5px;height:14px;background-image:radial-gradient(#a8adbc 0.8px,transparent 1px);background-size:2.5px 2.5px"></div>
<div class="abs" style="left:1657px;top:1004px;width:5px;height:14px;background-image:radial-gradient(#a8adbc 0.8px,transparent 1px);background-size:2.5px 2.5px"></div>
<svg class="ic" style="left:1460px;top:1005px" width="14" height="12" viewBox="0 0 14 12"><circle cx="8" cy="8" r="3.4" fill="none" stroke="#6a8ab8" stroke-width="1"/></svg>
<div class="abs" style="left:1384px;top:1010px;width:180px;height:22px;background:#fff;box-shadow:0 0 1px #b8bcc8"></div>
<svg class="ic" style="left:1356px;top:1003px" width="34" height="33" viewBox="0 0 34 33"><g transform="rotate(-8 17 17)"><rect x="4.4" y="3.4" width="26" height="26" rx="6" fill="#f0622a"/><path d="M24.4 10.4C21 7.6 11 7.4 10.6 12C10.2 17 24 15 23.4 20.4C23 25.4 12.4 24.6 9.4 22" stroke="#fff" stroke-width="3.4" fill="none" stroke-linecap="round"/></g></svg>
<div class="st" style="left:1392px;top:1012px;font-size:15.5px;line-height:18px;font-weight:bold;color:#1e6fd0">中</div>
<svg class="ic" style="left:1414px;top:1012px" width="150" height="20" viewBox="0 0 150 20"><circle cx="4.4" cy="5.4" r="1.5" fill="none" stroke="#1e6fd0" stroke-width="1.1"/><path d="M10.4 8.4c1,1.6 0.4,3.4 -1.4,4.4" stroke="#1e6fd0" stroke-width="1.7" fill="none" stroke-linecap="round"/><circle cx="10" cy="8" r="1.2" fill="#1e6fd0"/><circle cx="29.4" cy="9.4" r="7" fill="none" stroke="#1e6fd0" stroke-width="1.5"/><circle cx="26.8" cy="7.4" r="1" fill="#1e6fd0"/><circle cx="32" cy="7.4" r="1" fill="#1e6fd0"/><path d="M25.6 11c2,3 5.6,3 7.6,0" stroke="#1e6fd0" stroke-width="1.3" fill="none"/><rect x="49.6" y="2" width="5.4" height="10" rx="2.7" fill="#1e6fd0"/><path d="M46.8 8.4c0,7 11,7 11,0M52.3 13.8v3.2" stroke="#1e6fd0" stroke-width="1.4" fill="none"/><rect x="66.4" y="4" width="16" height="11" rx="1.6" fill="#1e6fd0"/><path d="M68.6 6.8h1.6M71.6 6.8h1.6M74.6 6.8h1.6M77.6 6.8h2.4M68.6 9.4h1.6M71.6 9.4h1.6M74.6 9.4h1.6M77.6 9.4h2.4M70.6 12.2h7.6" stroke="#fff" stroke-width="1.2"/><circle cx="97" cy="5.6" r="3" fill="#c4c8cc"/><path d="M90.4 15.6c0,-5.6 3,-6.6 6.6,-6.6c3.4,0 5.6,1 6,4l-3,0l0,2.6z" fill="#c4c8cc"/><text x="98.6" y="16.4" font-size="6.4" font-family="'Liberation Sans',sans-serif" fill="#9a9ea4" font-weight="bold">7</text><path d="M112 5.4l4-2.4c1.4,1.6 3.6,1.6 5,0l4,2.4l-1.6,3.6l-2-0.8v8h-5.8v-8l-2,0.8z" fill="#1e6fd0"/><rect x="133.4" y="3" width="5.6" height="5.6" rx="0.6" fill="#1e6fd0"/><rect x="140.6" y="3.4" width="4.8" height="4.8" rx="0.6" fill="none" stroke="#1e6fd0" stroke-width="1"/><rect x="133.4" y="10.2" width="5.6" height="5.6" rx="0.6" fill="#1e6fd0"/><rect x="140.2" y="10.2" width="5.6" height="5.6" rx="0.6" fill="#1e6fd0"/></svg>
</body></html>
